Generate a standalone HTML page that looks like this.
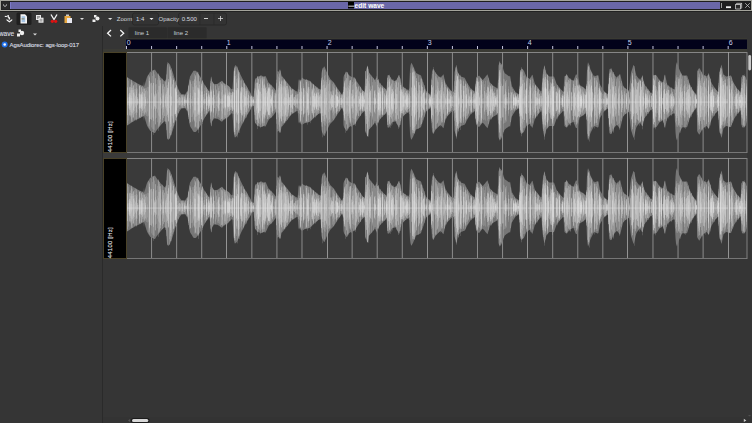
<!DOCTYPE html>
<html><head><meta charset="utf-8"><style>
*{margin:0;padding:0;box-sizing:border-box}
html,body{width:752px;height:423px;overflow:hidden;background:#353535;font-family:"Liberation Sans",sans-serif;}
.a{position:absolute;left:0;top:0}
svg{font-family:"Liberation Sans",sans-serif}
</style></head><body>
<svg class="a" width="752" height="423">
 <!-- title bar -->
 <rect x="0" y="0" width="752" height="11" fill="#a4a49c"/>
 <rect x="1" y="1" width="750" height="9" fill="#1e1e1e"/>
 <rect x="1.5" y="1.5" width="8" height="8" fill="#2a2a2a"/>
 <rect x="10" y="2" width="710" height="7" fill="#6a67a8"/>
 <rect x="10" y="2" width="1" height="7" fill="#7c7ac8"/>
 <path d="M3 4 L5 6.3 L7 4 L7 5 L5 7 L3 5Z" fill="#e8e8e8"/>
 <rect x="348" y="2" width="6" height="6.5" fill="#000"/>
 <rect x="348.3" y="5.7" width="5.8" height="0.9" fill="#f0f0f0"/>
 <text x="354.6" y="7.8" font-weight="bold" font-size="6.6" fill="#fff">edit wave</text>
 <rect x="721" y="3" width="1" height="5" fill="#9a9a9a"/>
 <rect x="726" y="6.3" width="5" height="1.8" fill="#f0f0f0"/>
 <path d="M735.5 4.5 h5 v4.5 h-5z" stroke="#c8c8c8" stroke-width="0.8" fill="#2a2a2a"/>
 <path d="M735.5 4.5 l1.2-1.2 h5 l-1.2 1.2z M740.5 4.5 l1.2-1.2 v4.5 l-1.2 1.2z" stroke="#c8c8c8" stroke-width="0.7" fill="#666"/>
 <path d="M745.2 3.2 L749.8 7.8 M749.8 3.2 L745.2 7.8" stroke="#c0c0c0" stroke-width="0.8"/>
 <rect x="0" y="11" width="752" height="1" fill="#222"/>

 <!-- toolbar -->
 <rect x="16.5" y="12.5" width="15" height="12.5" rx="1.5" fill="#1f1f1f"/>
 <g transform="translate(0,11)">
 <g fill="#f4f4f4">
  <rect x="4.8" y="4.9" width="2.1" height="1.1"/>
  <path d="M7.4 4 h1.4 v1.6 l1.3 1.2 v1.7 h-1.5 v-1.2 l-1.2-1.2z"/>
  <path d="M6.6 8 L9.4 10 L12.2 8 V9.6 L9.4 11.6 L6.6 9.6Z"/>
 </g>
 <path d="M20.5 3.3 h4.5 l2 2 v7.2 h-6.5z" fill="#f4f4f4"/>
 <rect x="21.6" y="5.2" width="3.6" height="6" fill="#a4c4e4"/>
 <rect x="21.5" y="7.5" width="3" height="0.8" fill="#807040"/>
 <rect x="36" y="4" width="5" height="5" fill="#e8e8e8"/><rect x="37" y="5" width="3" height="3" fill="#999"/>
 <rect x="38.5" y="6.7" width="5" height="5" fill="#f0f0f0"/><rect x="39.5" y="7.7" width="3" height="3" fill="#aaa"/>
 <path d="M51 3.5 L54 8.5 L57 3.5" stroke="#f4f4f4" stroke-width="1.3" fill="none"/>
 <circle cx="52.3" cy="10.3" r="1.6" fill="#e01010"/><circle cx="55.7" cy="10.3" r="1.6" fill="#e01010"/>
 <path d="M64.5 5 h6 v7 h-6z" fill="#e8a840"/>
 <rect x="66" y="3.5" width="3" height="1.5" fill="#ccc"/>
 <rect x="67" y="7" width="5" height="5" fill="#e8e8f0"/>
 <path d="M80 7 h4 l-2 2z" fill="#ddd"/>
 <g fill="#eee"><rect x="92.5" y="8.5" width="3" height="2.5"/><rect x="94" y="4" width="2.5" height="2.5"/><circle cx="97.5" cy="7.5" r="2"/></g>
 <path d="M108 7 h4.3 l-2.15 2z" fill="#ddd"/>
 <rect x="132.5" y="2" width="26" height="12" rx="2" fill="#333" stroke="#262626" stroke-width="0.8"/>
 <rect x="178.5" y="2" width="48" height="12" rx="2" fill="#333" stroke="#262626" stroke-width="0.8"/>
 <rect x="199.5" y="2" width="0.8" height="12" fill="#2a2a2a"/><rect x="213.5" y="2" width="0.8" height="12" fill="#2a2a2a"/>
 <text x="116.8" y="10.3" font-size="6" fill="#d0d4d8" stroke="none">Zoom</text>
 <text x="136" y="10.3" font-size="6" fill="#d8dce0">1:4</text>
 <path d="M149.5 7 h4 l-2 2z" fill="#eee"/>
 <text x="158.6" y="10.3" font-size="6" fill="#d0d4d8" stroke="none">Opacity</text>
 <text x="181.8" y="10.3" font-size="6" fill="#d8dce0">0.500</text>
 <rect x="204" y="7" width="4" height="1" fill="#d0d0d0"/>
 <rect x="218" y="7.1" width="5" height="0.8" fill="#d8d8d8"/><rect x="220.1" y="5" width="0.8" height="5" fill="#d8d8d8"/>
 </g>

 <!-- left panel -->
 <rect x="102" y="26" width="1" height="397" fill="#2a2a2a"/>
 <text x="-1.2" y="36.2" font-size="6.6" fill="#d8dce0" stroke="#d8dce0" stroke-width="0.12">wave</text>
 <g transform="translate(0,26)">
 <g fill="#eee"><rect x="17" y="7.5" width="3" height="3"/><rect x="18.5" y="3.5" width="2.5" height="2.5"/><circle cx="22" cy="7" r="2.2"/></g>
 <path d="M33 7.5 h4 l-2 2z" fill="#ddd"/>
 <circle cx="4.7" cy="18.5" r="3" fill="#1f6fe8"/><circle cx="4.7" cy="18.5" r="1.3" fill="#fff"/>
 </g>
 <text x="9.6" y="47" font-size="6" letter-spacing="-0.12" fill="#d8dce0" stroke="#d8dce0" stroke-width="0.12">AgsAudiorec: ags-loop-017</text>

 <!-- tabs -->
 <g transform="translate(103,26)">
 <path d="M8 4 L4.6 7.2 L8 10.4" stroke="#f4f4f4" stroke-width="1.3" fill="none"/>
 <path d="M17.3 4 L20.7 7.2 L17.3 10.4" stroke="#f4f4f4" stroke-width="1.3" fill="none"/>
 <rect x="25.5" y="1.3" width="38.5" height="11.4" fill="#2b2b2b" rx="0.8"/>
 <rect x="64.5" y="1.3" width="39.2" height="11.4" fill="#2b2b2b" rx="0.8"/>
 <text x="31.8" y="9" font-size="6" fill="#c8d0d8" stroke="none">line 1</text>
 <text x="70.7" y="9" font-size="6" fill="#c8d0d8" stroke="none">line 2</text>
 </g>

 <!-- ruler -->
 <rect x="126" y="38.4" width="621" height="1.1" fill="#3e3e32"/>
 <rect x="126" y="39.5" width="621" height="9.5" fill="#02021a"/>
 <g fill="#c8d4f0" font-size="7">
 <rect x="126.00" y="46" width="1" height="3" fill="#c8c8e0"/><rect x="151.07" y="46" width="1" height="3" fill="#c8c8e0"/><rect x="176.14" y="46" width="1" height="3" fill="#c8c8e0"/><rect x="201.21" y="46" width="1" height="3" fill="#c8c8e0"/><rect x="226.28" y="46" width="1" height="3" fill="#c8c8e0"/><rect x="251.35" y="46" width="1" height="3" fill="#c8c8e0"/><rect x="276.42" y="46" width="1" height="3" fill="#c8c8e0"/><rect x="301.49" y="46" width="1" height="3" fill="#c8c8e0"/><rect x="326.56" y="46" width="1" height="3" fill="#c8c8e0"/><rect x="351.63" y="46" width="1" height="3" fill="#c8c8e0"/><rect x="376.70" y="46" width="1" height="3" fill="#c8c8e0"/><rect x="401.77" y="46" width="1" height="3" fill="#c8c8e0"/><rect x="426.84" y="46" width="1" height="3" fill="#c8c8e0"/><rect x="451.91" y="46" width="1" height="3" fill="#c8c8e0"/><rect x="476.98" y="46" width="1" height="3" fill="#c8c8e0"/><rect x="502.05" y="46" width="1" height="3" fill="#c8c8e0"/><rect x="527.12" y="46" width="1" height="3" fill="#c8c8e0"/><rect x="552.19" y="46" width="1" height="3" fill="#c8c8e0"/><rect x="577.26" y="46" width="1" height="3" fill="#c8c8e0"/><rect x="602.33" y="46" width="1" height="3" fill="#c8c8e0"/><rect x="627.40" y="46" width="1" height="3" fill="#c8c8e0"/><rect x="652.47" y="46" width="1" height="3" fill="#c8c8e0"/><rect x="677.54" y="46" width="1" height="3" fill="#c8c8e0"/><rect x="702.61" y="46" width="1" height="3" fill="#c8c8e0"/><rect x="727.68" y="46" width="1" height="3" fill="#c8c8e0"/>
 <text x="126.8" y="44.9">0</text><text x="226.8" y="44.9">1</text><text x="327.8" y="44.9">2</text><text x="427.8" y="44.9">3</text><text x="527.8" y="44.9">4</text><text x="627.8" y="44.9">5</text><text x="728.8" y="44.9">6</text>
 </g>

 <!-- tracks -->
 <rect x="103" y="49" width="644" height="3" fill="#3a3a34"/>
 <rect x="103" y="153" width="644" height="5" fill="#3a3a3a"/>
 <rect x="103.5" y="52.5" width="23" height="100" fill="#000" stroke="#4a4228" stroke-width="1"/>
 <rect x="103.5" y="158.5" width="23" height="100" fill="#000" stroke="#4a4228" stroke-width="1"/>
 <text transform="translate(112.3,152.2) rotate(-90)" font-size="5.9" letter-spacing="0.25" fill="#e8ecf0" stroke="#e8ecf0" stroke-width="0.12">44100 [Hz]</text>
 <text transform="translate(112.3,258.2) rotate(-90)" font-size="5.9" letter-spacing="0.25" fill="#e8ecf0" stroke="#e8ecf0" stroke-width="0.12">44100 [Hz]</text>
 <rect x="127" y="52" width="620" height="101" fill="#3a3a3a"/>
 <rect x="127" y="158" width="620" height="101" fill="#3a3a3a"/>
 <rect x="127" y="52" width="620" height="1" fill="#868686"/>
 <rect x="127" y="152" width="620" height="1" fill="#767676"/>
 <rect x="127" y="158" width="620" height="1" fill="#868686"/>
 <rect x="127" y="258" width="620" height="1" fill="#767676"/>
 <rect x="746.5" y="52" width="1" height="101" fill="#808080"/>
 <rect x="746.5" y="158" width="1" height="101" fill="#808080"/>
 <rect x="151.07" y="52" width="1" height="100" fill="#8c8c8c"/><rect x="176.14" y="52" width="1" height="100" fill="#8c8c8c"/><rect x="201.21" y="52" width="1" height="100" fill="#8c8c8c"/><rect x="251.35" y="52" width="1" height="100" fill="#8c8c8c"/><rect x="276.42" y="52" width="1" height="100" fill="#8c8c8c"/><rect x="301.49" y="52" width="1" height="100" fill="#8c8c8c"/><rect x="351.63" y="52" width="1" height="100" fill="#8c8c8c"/><rect x="376.70" y="52" width="1" height="100" fill="#8c8c8c"/><rect x="401.77" y="52" width="1" height="100" fill="#8c8c8c"/><rect x="451.91" y="52" width="1" height="100" fill="#8c8c8c"/><rect x="476.98" y="52" width="1" height="100" fill="#8c8c8c"/><rect x="502.05" y="52" width="1" height="100" fill="#8c8c8c"/><rect x="552.19" y="52" width="1" height="100" fill="#8c8c8c"/><rect x="577.26" y="52" width="1" height="100" fill="#8c8c8c"/><rect x="602.33" y="52" width="1" height="100" fill="#8c8c8c"/><rect x="652.47" y="52" width="1" height="100" fill="#8c8c8c"/><rect x="677.54" y="52" width="1" height="100" fill="#8c8c8c"/><rect x="702.61" y="52" width="1" height="100" fill="#8c8c8c"/>
 <rect x="151.07" y="158" width="1" height="100" fill="#8c8c8c"/><rect x="176.14" y="158" width="1" height="100" fill="#8c8c8c"/><rect x="201.21" y="158" width="1" height="100" fill="#8c8c8c"/><rect x="251.35" y="158" width="1" height="100" fill="#8c8c8c"/><rect x="276.42" y="158" width="1" height="100" fill="#8c8c8c"/><rect x="301.49" y="158" width="1" height="100" fill="#8c8c8c"/><rect x="351.63" y="158" width="1" height="100" fill="#8c8c8c"/><rect x="376.70" y="158" width="1" height="100" fill="#8c8c8c"/><rect x="401.77" y="158" width="1" height="100" fill="#8c8c8c"/><rect x="451.91" y="158" width="1" height="100" fill="#8c8c8c"/><rect x="476.98" y="158" width="1" height="100" fill="#8c8c8c"/><rect x="502.05" y="158" width="1" height="100" fill="#8c8c8c"/><rect x="552.19" y="158" width="1" height="100" fill="#8c8c8c"/><rect x="577.26" y="158" width="1" height="100" fill="#8c8c8c"/><rect x="602.33" y="158" width="1" height="100" fill="#8c8c8c"/><rect x="652.47" y="158" width="1" height="100" fill="#8c8c8c"/><rect x="677.54" y="158" width="1" height="100" fill="#8c8c8c"/><rect x="702.61" y="158" width="1" height="100" fill="#8c8c8c"/>
 <g id="w1"><polygon points="127.0,77.2 127.5,77.4 128.0,77.7 128.5,78.1 129.0,78.4 129.5,78.7 130.0,79.0 130.5,79.4 131.0,79.7 131.5,80.0 132.0,80.3 132.5,80.6 133.0,80.9 133.5,81.2 134.0,81.5 134.5,81.8 135.0,82.1 135.5,82.4 136.0,82.7 136.5,83.0 137.0,83.2 137.5,83.4 138.0,83.7 138.5,83.9 139.0,84.2 139.5,84.4 140.0,84.7 140.5,84.9 141.0,85.2 141.5,85.4 142.0,85.7 142.5,85.9 143.0,86.2 143.5,86.8 144.0,81.5 144.5,86.5 145.0,84.0 145.5,81.9 146.0,80.3 146.5,78.6 147.0,77.0 147.5,76.0 148.0,75.2 148.5,74.4 149.0,73.7 149.5,72.9 150.0,72.1 150.5,71.7 151.0,71.3 151.5,71.0 152.0,70.7 152.5,70.5 153.0,70.3 153.5,70.1 154.0,69.9 154.5,69.7 155.0,69.6 155.5,70.4 156.0,71.3 156.5,72.1 157.0,72.8 157.5,73.4 158.0,74.1 158.5,74.7 159.0,75.3 159.5,75.9 160.0,76.6 160.5,77.2 161.0,77.8 161.5,78.3 162.0,78.8 162.5,79.3 163.0,79.8 163.5,80.3 164.0,80.8 164.5,81.3 165.0,81.2 165.5,80.9 166.0,78.2 166.5,71.6 167.0,65.0 167.5,63.9 168.0,62.9 168.5,62.8 169.0,63.5 169.5,64.1 170.0,64.8 170.5,66.1 171.0,67.5 171.5,68.8 172.0,70.2 172.5,71.6 173.0,73.0 173.5,74.6 174.0,76.4 174.5,78.1 175.0,79.8 175.5,81.5 176.0,82.8 176.5,84.1 177.0,85.4 177.5,86.7 178.0,88.0 178.5,89.3 179.0,90.6 179.5,91.4 180.0,92.2 180.5,92.9 181.0,93.6 181.5,94.4 182.0,94.4 182.5,94.4 183.0,94.4 183.5,94.4 184.0,94.4 184.5,94.4 185.0,94.4 185.5,93.8 186.0,93.0 186.5,92.3 187.0,91.6 187.5,90.8 188.0,88.0 188.5,85.1 189.0,82.1 189.5,79.2 190.0,76.5 190.5,75.7 191.0,74.9 191.5,74.1 192.0,73.3 192.5,72.4 193.0,71.6 193.5,70.8 194.0,70.7 194.5,70.7 195.0,70.7 195.5,70.7 196.0,70.8 196.5,71.4 197.0,72.0 197.5,72.6 198.0,73.2 198.5,73.9 199.0,74.7 199.5,75.4 200.0,76.2 200.5,77.0 201.0,77.8 201.5,78.8 202.0,79.8 202.5,80.8 203.0,81.7 203.5,82.7 204.0,83.7 204.5,84.7 205.0,85.4 205.5,86.1 206.0,86.8 206.5,87.5 207.0,88.2 207.5,88.9 208.0,89.6 208.5,90.3 209.0,91.0 209.5,91.7 210.0,87.4 210.5,80.7 211.0,76.8 211.5,76.8 212.0,80.6 212.5,81.9 213.0,82.6 213.5,83.3 214.0,83.9 214.5,84.3 215.0,84.2 215.5,84.1 216.0,84.0 216.5,83.9 217.0,83.9 217.5,83.8 218.0,83.6 218.5,83.2 219.0,82.8 219.5,82.5 220.0,82.1 220.5,81.7 221.0,81.3 221.5,81.1 222.0,80.8 222.5,81.3 223.0,81.9 223.5,82.6 224.0,83.2 224.5,83.5 225.0,83.8 225.5,84.1 226.0,84.4 226.5,84.7 227.0,85.0 227.5,85.3 228.0,85.6 228.5,85.9 229.0,86.4 229.5,87.0 230.0,87.6 230.5,88.2 231.0,88.7 231.5,89.3 232.0,89.3 232.5,88.6 233.0,81.2 233.5,72.0 234.0,69.3 234.5,67.7 235.0,66.0 235.5,65.0 236.0,65.6 236.5,66.3 237.0,66.9 237.5,67.9 238.0,69.0 238.5,70.2 239.0,71.3 239.5,72.5 240.0,73.6 240.5,74.7 241.0,75.8 241.5,76.8 242.0,77.8 242.5,78.8 243.0,79.7 243.5,80.7 244.0,81.7 244.5,82.7 245.0,83.5 245.5,84.4 246.0,85.2 246.5,86.1 247.0,87.0 247.5,87.8 248.0,88.7 248.5,89.5 249.0,90.4 249.5,91.2 250.0,92.0 250.5,92.9 251.0,93.7 251.5,94.5 252.0,95.3 252.5,96.1 253.0,96.7 253.5,96.7 254.0,91.8 254.5,83.2 255.0,79.8 255.5,79.2 256.0,78.6 256.5,78.0 257.0,77.4 257.5,76.9 258.0,76.5 258.5,76.4 259.0,76.2 259.5,76.0 260.0,75.9 260.5,75.7 261.0,75.5 261.5,75.5 262.0,75.8 262.5,76.0 263.0,76.3 263.5,76.5 264.0,76.5 264.5,76.4 265.0,76.2 265.5,76.0 266.0,77.0 266.5,78.1 267.0,79.2 267.5,80.3 268.0,81.4 268.5,82.4 269.0,83.0 269.5,83.5 270.0,84.0 270.5,84.4 271.0,84.9 271.5,85.4 272.0,85.9 272.5,86.4 273.0,86.9 273.5,87.4 274.0,88.1 274.5,88.8 275.0,89.5 275.5,90.1 276.0,90.8 276.5,80.4 277.0,70.7 277.5,71.2 278.0,71.6 278.5,71.8 279.0,70.9 279.5,70.1 280.0,69.3 280.5,70.4 281.0,73.1 281.5,75.5 282.0,76.1 282.5,76.7 283.0,77.3 283.5,77.9 284.0,78.5 284.5,79.1 285.0,79.7 285.5,80.4 286.0,81.0 286.5,81.7 287.0,82.3 287.5,83.0 288.0,83.6 288.5,84.3 289.0,84.9 289.5,85.6 290.0,86.3 290.5,86.9 291.0,87.6 291.5,88.2 292.0,88.6 292.5,88.9 293.0,89.2 293.5,89.5 294.0,89.8 294.5,90.1 295.0,90.4 295.5,90.7 296.0,91.0 296.5,91.3 297.0,91.6 297.5,91.9 298.0,88.0 298.5,80.9 299.0,79.1 299.5,80.1 300.0,81.1 300.5,80.6 301.0,79.6 301.5,78.7 302.0,77.8 302.5,78.1 303.0,78.4 303.5,78.7 304.0,79.0 304.5,79.3 305.0,79.6 305.5,79.7 306.0,79.8 306.5,80.0 307.0,80.1 307.5,80.2 308.0,80.3 308.5,80.5 309.0,80.6 309.5,80.7 310.0,81.0 310.5,81.5 311.0,82.0 311.5,82.5 312.0,82.9 312.5,83.4 313.0,83.9 313.5,84.4 314.0,84.8 314.5,85.3 315.0,85.7 315.5,86.1 316.0,86.5 316.5,87.0 317.0,87.4 317.5,87.8 318.0,88.3 318.5,88.6 319.0,88.8 319.5,89.1 320.0,89.3 320.5,89.6 321.0,82.6 321.5,73.2 322.0,70.5 322.5,69.5 323.0,68.5 323.5,67.5 324.0,66.5 324.5,66.6 325.0,67.8 325.5,69.0 326.0,70.3 326.5,71.5 327.0,72.6 327.5,73.5 328.0,74.5 328.5,75.5 329.0,76.5 329.5,77.5 330.0,78.4 330.5,79.2 331.0,79.7 331.5,80.2 332.0,80.7 332.5,81.2 333.0,81.7 333.5,82.1 334.0,82.7 334.5,83.5 335.0,84.3 335.5,85.2 336.0,86.0 336.5,86.8 337.0,87.6 337.5,88.4 338.0,89.1 338.5,89.8 339.0,90.5 339.5,91.2 340.0,91.9 340.5,92.6 341.0,93.3 341.5,94.0 342.0,94.1 342.5,93.6 343.0,91.7 343.5,77.5 344.0,75.3 344.5,74.6 345.0,73.8 345.5,73.0 346.0,72.2 346.5,71.4 347.0,72.2 347.5,73.1 348.0,74.1 348.5,74.9 349.0,75.3 349.5,75.6 350.0,76.0 350.5,76.3 351.0,76.6 351.5,76.8 352.0,77.0 352.5,77.1 353.0,77.3 353.5,77.4 354.0,77.6 354.5,77.8 355.0,78.4 355.5,79.3 356.0,80.1 356.5,80.9 357.0,81.7 357.5,82.5 358.0,83.3 358.5,84.1 359.0,84.8 359.5,85.6 360.0,86.3 360.5,87.0 361.0,87.8 361.5,88.5 362.0,89.3 362.5,90.0 363.0,90.7 363.5,91.0 364.0,91.2 364.5,91.4 365.0,81.5 365.5,71.8 366.0,70.2 366.5,68.6 367.0,66.9 367.5,65.3 368.0,66.8 368.5,69.7 369.0,72.5 369.5,73.5 370.0,74.0 370.5,74.5 371.0,75.0 371.5,75.6 372.0,76.2 372.5,76.9 373.0,77.5 373.5,78.1 374.0,78.8 374.5,79.4 375.0,80.0 375.5,79.2 376.0,77.9 376.5,76.6 377.0,75.6 377.5,77.1 378.0,78.6 378.5,80.0 379.0,81.5 379.5,82.7 380.0,83.3 380.5,83.8 381.0,84.4 381.5,85.0 382.0,85.5 382.5,86.1 383.0,86.6 383.5,87.2 384.0,87.6 384.5,88.0 385.0,88.4 385.5,88.8 386.0,89.2 386.5,89.6 387.0,82.7 387.5,75.4 388.0,75.2 388.5,75.0 389.0,74.9 389.5,75.7 390.0,76.6 390.5,77.5 391.0,78.4 391.5,79.3 392.0,80.2 392.5,80.3 393.0,80.5 393.5,80.7 394.0,80.8 394.5,81.0 395.0,81.2 395.5,81.3 396.0,80.6 396.5,79.7 397.0,78.7 397.5,77.7 398.0,76.7 398.5,75.7 399.0,74.8 399.5,75.4 400.0,77.6 400.5,79.8 401.0,82.0 401.5,84.2 402.0,85.2 402.5,85.7 403.0,86.2 403.5,86.7 404.0,87.2 404.5,87.7 405.0,88.2 405.5,88.6 406.0,88.9 406.5,89.2 407.0,89.6 407.5,89.9 408.0,90.2 408.5,90.6 409.0,88.9 409.5,79.1 410.0,69.3 410.5,65.6 411.0,63.7 411.5,62.8 412.0,63.8 412.5,64.8 413.0,65.7 413.5,66.9 414.0,68.1 414.5,69.2 415.0,70.4 415.5,71.6 416.0,72.8 416.5,73.3 417.0,73.5 417.5,73.7 418.0,74.0 418.5,74.2 419.0,74.5 419.5,74.7 420.0,75.0 420.5,75.2 421.0,75.6 421.5,77.0 422.0,78.5 422.5,80.0 423.0,81.4 423.5,82.9 424.0,84.5 424.5,86.1 425.0,87.7 425.5,89.2 426.0,90.8 426.5,91.3 427.0,91.8 427.5,92.3 428.0,92.8 428.5,93.2 429.0,93.6 429.5,94.0 430.0,94.3 430.5,94.7 431.0,90.8 431.5,78.8 432.0,71.4 432.5,70.2 433.0,68.9 433.5,68.9 434.0,69.8 434.5,70.8 435.0,71.8 435.5,72.8 436.0,73.4 436.5,73.9 437.0,74.4 437.5,74.9 438.0,75.4 438.5,75.9 439.0,76.4 439.5,76.9 440.0,77.3 440.5,77.8 441.0,77.2 441.5,76.6 442.0,76.0 442.5,75.4 443.0,74.8 443.5,74.3 444.0,76.6 444.5,78.9 445.0,81.2 445.5,82.9 446.0,83.7 446.5,84.6 447.0,85.5 447.5,86.3 448.0,87.0 448.5,87.6 449.0,88.1 449.5,88.7 450.0,89.3 450.5,89.9 451.0,90.4 451.5,90.9 452.0,91.1 452.5,91.4 453.0,91.6 453.5,91.9 454.0,84.0 454.5,72.4 455.0,70.3 455.5,68.1 456.0,65.9 456.5,64.8 457.0,67.6 457.5,70.4 458.0,73.1 458.5,73.7 459.0,74.3 459.5,74.9 460.0,75.5 460.5,76.1 461.0,76.6 461.5,76.8 462.0,77.0 462.5,77.1 463.0,77.3 463.5,77.5 464.0,77.6 464.5,77.8 465.0,78.6 465.5,79.6 466.0,80.6 466.5,81.5 467.0,82.5 467.5,83.3 468.0,84.2 468.5,85.0 469.0,85.8 469.5,86.6 470.0,87.4 470.5,88.2 471.0,88.8 471.5,89.2 472.0,89.6 472.5,90.0 473.0,90.4 473.5,90.9 474.0,91.3 474.5,91.7 475.0,90.3 475.5,84.4 476.0,78.5 476.5,77.5 477.0,77.1 477.5,76.7 478.0,76.3 478.5,75.9 479.0,75.5 479.5,76.0 480.0,76.7 480.5,77.3 481.0,78.0 481.5,78.6 482.0,79.3 482.5,79.9 483.0,79.8 483.5,79.2 484.0,78.6 484.5,78.0 485.0,77.4 485.5,76.7 486.0,76.1 486.5,75.5 487.0,74.9 487.5,74.3 488.0,75.9 488.5,77.6 489.0,79.3 489.5,81.1 490.0,82.6 490.5,83.1 491.0,83.6 491.5,84.1 492.0,84.6 492.5,85.1 493.0,85.5 493.5,86.0 494.0,86.3 494.5,86.6 495.0,86.9 495.5,87.2 496.0,87.5 496.5,87.7 497.0,88.0 497.5,88.3 498.0,80.0 498.5,65.6 499.0,63.9 499.5,62.1 500.0,62.4 500.5,63.0 501.0,63.6 501.5,64.6 502.0,65.6 502.5,66.9 503.0,68.3 503.5,69.8 504.0,71.3 504.5,72.7 505.0,73.4 505.5,73.7 506.0,74.1 506.5,74.5 507.0,74.8 507.5,75.2 508.0,75.6 508.5,75.9 509.0,76.3 509.5,76.5 510.0,75.5 510.5,78.1 511.0,81.1 511.5,84.0 512.0,86.3 512.5,87.1 513.0,88.0 513.5,88.8 514.0,89.6 514.5,90.4 515.0,91.2 515.5,92.0 516.0,92.3 516.5,92.7 517.0,93.0 517.5,93.3 518.0,93.6 518.5,94.0 519.0,94.3 519.5,84.9 520.0,73.3 520.5,70.8 521.0,69.6 521.5,68.4 522.0,68.8 522.5,69.3 523.0,69.8 523.5,70.3 524.0,70.9 524.5,72.1 525.0,73.4 525.5,74.6 526.0,75.8 526.5,76.7 527.0,77.1 527.5,77.4 528.0,77.7 528.5,78.0 529.0,78.4 529.5,78.7 530.0,78.9 530.5,77.9 531.0,76.9 531.5,76.0 532.0,75.0 532.5,74.8 533.0,76.8 533.5,78.7 534.0,80.7 534.5,82.6 535.0,84.0 535.5,84.7 536.0,85.3 536.5,86.0 537.0,86.6 537.5,87.3 538.0,87.9 538.5,88.6 539.0,89.2 539.5,89.8 540.0,90.3 540.5,90.9 541.0,91.5 541.5,90.7 542.0,83.3 542.5,76.0 543.0,72.3 543.5,69.6 544.0,67.0 544.5,65.1 545.0,67.4 545.5,69.7 546.0,72.0 546.5,73.4 547.0,74.0 547.5,74.6 548.0,75.2 548.5,75.7 549.0,76.3 549.5,76.6 550.0,76.6 550.5,76.6 551.0,76.6 551.5,76.6 552.0,76.6 552.5,76.6 553.0,76.6 553.5,76.6 554.0,76.6 554.5,77.9 555.0,79.3 555.5,80.8 556.0,82.3 556.5,83.7 557.0,84.4 557.5,85.0 558.0,85.7 558.5,86.4 559.0,87.0 559.5,87.7 560.0,88.3 560.5,88.9 561.0,89.4 561.5,89.9 562.0,90.4 562.5,91.0 563.0,91.5 563.5,91.7 564.0,82.6 564.5,76.5 565.0,76.1 565.5,75.8 566.0,75.4 566.5,75.0 567.0,75.2 567.5,75.9 568.0,76.6 568.5,77.3 569.0,78.0 569.5,78.6 570.0,79.1 570.5,79.4 571.0,79.6 571.5,79.8 572.0,80.1 572.5,80.3 573.0,80.6 573.5,80.5 574.0,79.2 574.5,78.0 575.0,76.7 575.5,75.5 576.0,74.3 576.5,74.6 577.0,74.9 577.5,75.2 578.0,76.4 578.5,79.1 579.0,81.7 579.5,84.3 580.0,85.2 580.5,85.5 581.0,85.8 581.5,86.1 582.0,86.5 582.5,86.8 583.0,87.1 583.5,87.5 584.0,87.9 584.5,88.3 585.0,88.6 585.5,89.0 586.0,89.4 586.5,83.1 587.0,69.8 587.5,65.0 588.0,62.2 588.5,63.2 589.0,64.8 589.5,66.4 590.0,68.0 590.5,69.6 591.0,70.6 591.5,71.5 592.0,72.5 592.5,73.5 593.0,74.5 593.5,75.5 594.0,76.4 594.5,76.5 595.0,76.2 595.5,76.0 596.0,75.8 596.5,75.6 597.0,75.4 597.5,75.2 598.0,75.0 598.5,75.9 599.0,78.7 599.5,81.4 600.0,84.2 600.5,85.5 601.0,86.3 601.5,87.1 602.0,88.0 602.5,88.8 603.0,89.6 603.5,90.4 604.0,91.0 604.5,91.4 605.0,91.9 605.5,92.3 606.0,92.7 606.5,93.1 607.0,93.5 607.5,94.0 608.0,93.7 608.5,83.4 609.0,73.1 609.5,69.3 610.0,69.0 610.5,68.7 611.0,68.4 611.5,69.4 612.0,70.3 612.5,71.3 613.0,72.3 613.5,73.3 614.0,74.3 614.5,75.2 615.0,75.8 615.5,76.3 616.0,76.8 616.5,77.3 617.0,77.8 617.5,77.1 618.0,76.5 618.5,75.8 619.0,75.1 619.5,74.4 620.0,73.7 620.5,75.6 621.0,77.7 621.5,79.7 622.0,81.8 622.5,83.8 623.0,85.9 623.5,86.5 624.0,87.0 624.5,87.5 625.0,88.0 625.5,88.5 626.0,88.8 626.5,89.1 627.0,89.5 627.5,89.8 628.0,90.1 628.5,90.4 629.0,90.8 629.5,86.7 630.0,81.8 630.5,76.9 631.0,72.7 631.5,71.1 632.0,69.5 632.5,67.9 633.0,66.3 633.5,64.7 634.0,65.7 634.5,67.8 635.0,69.9 635.5,72.0 636.0,74.1 636.5,75.7 637.0,76.3 637.5,77.0 638.0,77.7 638.5,78.3 639.0,79.0 639.5,79.6 640.0,80.1 640.5,79.2 641.0,78.3 641.5,77.5 642.0,76.6 642.5,76.6 643.0,78.4 643.5,80.3 644.0,82.1 644.5,84.0 645.0,85.2 645.5,85.9 646.0,86.5 646.5,87.2 647.0,87.8 647.5,88.5 648.0,89.1 648.5,89.8 649.0,90.5 649.5,91.2 650.0,91.8 650.5,92.5 651.0,93.2 651.5,92.7 652.0,92.2 652.5,84.5 653.0,76.3 653.5,75.6 654.0,74.9 654.5,75.0 655.0,75.1 655.5,75.2 656.0,75.3 656.5,75.6 657.0,76.3 657.5,77.1 658.0,77.9 658.5,78.7 659.0,79.5 659.5,80.2 660.0,80.5 660.5,80.9 661.0,81.2 661.5,81.5 662.0,81.8 662.5,82.2 663.0,82.5 663.5,80.4 664.0,77.9 664.5,75.5 665.0,74.3 665.5,76.6 666.0,78.9 666.5,81.3 667.0,83.6 667.5,85.1 668.0,85.5 668.5,85.9 669.0,86.2 669.5,86.6 670.0,87.0 670.5,87.4 671.0,87.7 671.5,87.9 672.0,88.2 672.5,88.5 673.0,88.8 673.5,89.1 674.0,89.3 674.5,89.6 675.0,80.3 675.5,70.5 676.0,65.1 676.5,63.3 677.0,62.1 677.5,63.7 678.0,65.2 678.5,66.8 679.0,68.4 679.5,69.8 680.0,70.8 680.5,71.8 681.0,72.8 681.5,73.8 682.0,74.7 682.5,75.4 683.0,75.4 683.5,75.4 684.0,75.4 684.5,75.4 685.0,75.4 685.5,75.4 686.0,75.4 686.5,75.4 687.0,75.4 687.5,76.5 688.0,78.2 688.5,79.9 689.0,81.7 689.5,83.4 690.0,84.5 690.5,85.5 691.0,86.5 691.5,87.4 692.0,88.4 692.5,89.4 693.0,90.4 693.5,91.2 694.0,91.8 694.5,92.4 695.0,93.0 695.5,93.6 696.0,94.2 696.5,94.8 697.0,83.4 697.5,70.6 698.0,69.8 698.5,69.0 699.0,68.2 699.5,68.2 700.0,69.1 700.5,70.0 701.0,70.9 701.5,71.8 702.0,72.7 702.5,73.6 703.0,74.3 703.5,74.7 704.0,75.0 704.5,75.3 705.0,75.7 705.5,76.0 706.0,76.3 706.5,76.6 707.0,76.0 707.5,75.4 708.0,74.8 708.5,74.2 709.0,74.0 709.5,75.9 710.0,77.7 710.5,79.5 711.0,81.4 711.5,82.8 712.0,83.7 712.5,84.5 713.0,85.3 713.5,86.1 714.0,86.9 714.5,87.7 715.0,88.5 715.5,89.1 716.0,89.7 716.5,90.3 717.0,90.9 717.5,91.5 718.0,91.2 718.5,83.3 719.0,75.5 719.5,71.8 720.0,70.0 720.5,68.1 721.0,66.3 721.5,64.5 722.0,66.6 722.5,69.4 723.0,72.2 723.5,74.4 724.0,74.8 724.5,75.2 725.0,75.6 725.5,76.1 726.0,76.5 726.5,76.6 727.0,76.4 727.5,76.3 728.0,76.2 728.5,76.1 729.0,75.9 729.5,75.8 730.0,75.7 730.5,75.6 731.0,75.5 731.5,76.9 732.0,78.3 732.5,79.8 733.0,81.3 733.5,82.7 734.0,83.5 734.5,84.3 735.0,85.1 735.5,85.9 736.0,86.7 736.5,87.6 737.0,88.4 737.5,88.9 738.0,89.4 738.5,89.9 739.0,90.4 739.5,90.9 740.0,91.3 740.5,91.8 741.0,86.4 741.5,78.2 742.0,75.7 742.5,75.3 743.0,74.9 743.5,75.2 744.0,75.5 744.5,75.9 745.0,76.3 745.5,76.7 746.0,78.1 746.5,79.6 747.0,80.2 747.0,122.4 746.5,123.0 746.0,124.5 745.5,125.9 745.0,126.3 744.5,126.7 744.0,127.1 743.5,127.4 743.0,127.7 742.5,127.3 742.0,126.9 741.5,124.4 741.0,116.2 740.5,110.8 740.0,111.3 739.5,111.7 739.0,112.2 738.5,112.7 738.0,113.2 737.5,113.7 737.0,114.2 736.5,115.0 736.0,115.9 735.5,116.7 735.0,117.5 734.5,118.3 734.0,119.1 733.5,119.9 733.0,121.3 732.5,122.8 732.0,124.3 731.5,125.7 731.0,127.1 730.5,127.0 730.0,126.9 729.5,126.8 729.0,126.7 728.5,126.5 728.0,126.4 727.5,126.3 727.0,126.2 726.5,126.0 726.0,126.1 725.5,126.5 725.0,127.0 724.5,127.4 724.0,127.8 723.5,128.2 723.0,130.4 722.5,133.2 722.0,136.0 721.5,138.1 721.0,136.3 720.5,134.5 720.0,132.6 719.5,130.8 719.0,127.1 718.5,119.3 718.0,111.4 717.5,111.1 717.0,111.7 716.5,112.3 716.0,112.9 715.5,113.5 715.0,114.1 714.5,114.9 714.0,115.7 713.5,116.5 713.0,117.3 712.5,118.1 712.0,118.9 711.5,119.8 711.0,121.2 710.5,123.1 710.0,124.9 709.5,126.7 709.0,128.6 708.5,128.4 708.0,127.8 707.5,127.2 707.0,126.6 706.5,126.0 706.0,126.3 705.5,126.6 705.0,126.9 704.5,127.3 704.0,127.6 703.5,127.9 703.0,128.3 702.5,129.0 702.0,129.9 701.5,130.8 701.0,131.7 700.5,132.6 700.0,133.5 699.5,134.4 699.0,134.4 698.5,133.6 698.0,132.8 697.5,132.0 697.0,119.2 696.5,107.8 696.0,108.4 695.5,109.0 695.0,109.6 694.5,110.2 694.0,110.8 693.5,111.4 693.0,112.2 692.5,113.2 692.0,114.2 691.5,115.2 691.0,116.1 690.5,117.1 690.0,118.1 689.5,119.2 689.0,120.9 688.5,122.7 688.0,124.4 687.5,126.1 687.0,127.2 686.5,127.2 686.0,127.2 685.5,127.2 685.0,127.2 684.5,127.2 684.0,127.2 683.5,127.2 683.0,127.2 682.5,127.2 682.0,127.9 681.5,128.8 681.0,129.8 680.5,130.8 680.0,131.8 679.5,132.8 679.0,134.2 678.5,135.8 678.0,137.4 677.5,138.9 677.0,140.5 676.5,139.3 676.0,137.5 675.5,132.1 675.0,122.3 674.5,113.0 674.0,113.3 673.5,113.5 673.0,113.8 672.5,114.1 672.0,114.4 671.5,114.7 671.0,114.9 670.5,115.2 670.0,115.6 669.5,116.0 669.0,116.4 668.5,116.7 668.0,117.1 667.5,117.5 667.0,119.0 666.5,121.3 666.0,123.7 665.5,126.0 665.0,128.3 664.5,127.1 664.0,124.7 663.5,122.2 663.0,120.1 662.5,120.4 662.0,120.8 661.5,121.1 661.0,121.4 660.5,121.7 660.0,122.1 659.5,122.4 659.0,123.1 658.5,123.9 658.0,124.7 657.5,125.5 657.0,126.3 656.5,127.0 656.0,127.3 655.5,127.4 655.0,127.5 654.5,127.6 654.0,127.7 653.5,127.0 653.0,126.3 652.5,118.1 652.0,110.4 651.5,109.9 651.0,109.4 650.5,110.1 650.0,110.8 649.5,111.4 649.0,112.1 648.5,112.8 648.0,113.5 647.5,114.1 647.0,114.8 646.5,115.4 646.0,116.1 645.5,116.7 645.0,117.4 644.5,118.6 644.0,120.5 643.5,122.3 643.0,124.2 642.5,126.0 642.0,126.0 641.5,125.1 641.0,124.3 640.5,123.4 640.0,122.5 639.5,123.0 639.0,123.6 638.5,124.3 638.0,124.9 637.5,125.6 637.0,126.3 636.5,126.9 636.0,128.5 635.5,130.6 635.0,132.7 634.5,134.8 634.0,136.9 633.5,137.9 633.0,136.3 632.5,134.7 632.0,133.1 631.5,131.5 631.0,129.9 630.5,125.7 630.0,120.8 629.5,115.9 629.0,111.8 628.5,112.2 628.0,112.5 627.5,112.8 627.0,113.1 626.5,113.5 626.0,113.8 625.5,114.1 625.0,114.6 624.5,115.1 624.0,115.6 623.5,116.1 623.0,116.7 622.5,118.8 622.0,120.8 621.5,122.9 621.0,124.9 620.5,127.0 620.0,128.9 619.5,128.2 619.0,127.5 618.5,126.8 618.0,126.1 617.5,125.5 617.0,124.8 616.5,125.3 616.0,125.8 615.5,126.3 615.0,126.8 614.5,127.4 614.0,128.3 613.5,129.3 613.0,130.3 612.5,131.3 612.0,132.3 611.5,133.2 611.0,134.2 610.5,133.9 610.0,133.6 609.5,133.3 609.0,129.5 608.5,119.2 608.0,108.9 607.5,108.6 607.0,109.1 606.5,109.5 606.0,109.9 605.5,110.3 605.0,110.7 604.5,111.2 604.0,111.6 603.5,112.2 603.0,113.0 602.5,113.8 602.0,114.6 601.5,115.5 601.0,116.3 600.5,117.1 600.0,118.4 599.5,121.2 599.0,123.9 598.5,126.7 598.0,127.6 597.5,127.4 597.0,127.2 596.5,127.0 596.0,126.8 595.5,126.6 595.0,126.4 594.5,126.1 594.0,126.2 593.5,127.1 593.0,128.1 592.5,129.1 592.0,130.1 591.5,131.1 591.0,132.0 590.5,133.0 590.0,134.6 589.5,136.2 589.0,137.8 588.5,139.4 588.0,140.4 587.5,137.6 587.0,132.8 586.5,119.5 586.0,113.2 585.5,113.6 585.0,114.0 584.5,114.3 584.0,114.7 583.5,115.1 583.0,115.5 582.5,115.8 582.0,116.1 581.5,116.5 581.0,116.8 580.5,117.1 580.0,117.4 579.5,118.3 579.0,120.9 578.5,123.5 578.0,126.2 577.5,127.4 577.0,127.7 576.5,128.0 576.0,128.3 575.5,127.1 575.0,125.9 574.5,124.6 574.0,123.4 573.5,122.1 573.0,122.0 572.5,122.3 572.0,122.5 571.5,122.8 571.0,123.0 570.5,123.2 570.0,123.5 569.5,124.0 569.0,124.6 568.5,125.3 568.0,126.0 567.5,126.7 567.0,127.4 566.5,127.6 566.0,127.2 565.5,126.8 565.0,126.5 564.5,126.1 564.0,120.0 563.5,110.9 563.0,111.1 562.5,111.6 562.0,112.2 561.5,112.7 561.0,113.2 560.5,113.7 560.0,114.3 559.5,114.9 559.0,115.6 558.5,116.2 558.0,116.9 557.5,117.6 557.0,118.2 556.5,118.9 556.0,120.3 555.5,121.8 555.0,123.3 554.5,124.7 554.0,126.0 553.5,126.0 553.0,126.0 552.5,126.0 552.0,126.0 551.5,126.0 551.0,126.0 550.5,126.0 550.0,126.0 549.5,126.0 549.0,126.3 548.5,126.9 548.0,127.4 547.5,128.0 547.0,128.6 546.5,129.2 546.0,130.6 545.5,132.9 545.0,135.2 544.5,137.5 544.0,135.6 543.5,133.0 543.0,130.3 542.5,126.6 542.0,119.3 541.5,111.9 541.0,111.1 540.5,111.7 540.0,112.3 539.5,112.8 539.0,113.4 538.5,114.0 538.0,114.7 537.5,115.3 537.0,116.0 536.5,116.6 536.0,117.3 535.5,117.9 535.0,118.6 534.5,120.0 534.0,121.9 533.5,123.9 533.0,125.8 532.5,127.8 532.0,127.6 531.5,126.6 531.0,125.7 530.5,124.7 530.0,123.7 529.5,123.9 529.0,124.2 528.5,124.6 528.0,124.9 527.5,125.2 527.0,125.5 526.5,125.9 526.0,126.8 525.5,128.0 525.0,129.2 524.5,130.5 524.0,131.7 523.5,132.3 523.0,132.8 522.5,133.3 522.0,133.8 521.5,134.2 521.0,133.0 520.5,131.8 520.0,129.3 519.5,117.7 519.0,108.3 518.5,108.6 518.0,109.0 517.5,109.3 517.0,109.6 516.5,109.9 516.0,110.3 515.5,110.6 515.0,111.4 514.5,112.2 514.0,113.0 513.5,113.8 513.0,114.6 512.5,115.5 512.0,116.3 511.5,118.6 511.0,121.5 510.5,124.5 510.0,127.1 509.5,126.1 509.0,126.3 508.5,126.7 508.0,127.0 507.5,127.4 507.0,127.8 506.5,128.1 506.0,128.5 505.5,128.9 505.0,129.2 504.5,129.9 504.0,131.3 503.5,132.8 503.0,134.3 502.5,135.7 502.0,137.0 501.5,138.0 501.0,139.0 500.5,139.6 500.0,140.2 499.5,140.5 499.0,138.7 498.5,137.0 498.0,122.6 497.5,114.3 497.0,114.6 496.5,114.9 496.0,115.1 495.5,115.4 495.0,115.7 494.5,116.0 494.0,116.3 493.5,116.6 493.0,117.1 492.5,117.5 492.0,118.0 491.5,118.5 491.0,119.0 490.5,119.5 490.0,120.0 489.5,121.5 489.0,123.3 488.5,125.0 488.0,126.7 487.5,128.3 487.0,127.7 486.5,127.1 486.0,126.5 485.5,125.9 485.0,125.2 484.5,124.6 484.0,124.0 483.5,123.4 483.0,122.8 482.5,122.7 482.0,123.3 481.5,124.0 481.0,124.6 480.5,125.3 480.0,125.9 479.5,126.6 479.0,127.1 478.5,126.7 478.0,126.3 477.5,125.9 477.0,125.5 476.5,125.1 476.0,124.1 475.5,118.2 475.0,112.3 474.5,110.9 474.0,111.3 473.5,111.7 473.0,112.2 472.5,112.6 472.0,113.0 471.5,113.4 471.0,113.8 470.5,114.4 470.0,115.2 469.5,116.0 469.0,116.8 468.5,117.6 468.0,118.4 467.5,119.3 467.0,120.1 466.5,121.1 466.0,122.0 465.5,123.0 465.0,124.0 464.5,124.8 464.0,125.0 463.5,125.1 463.0,125.3 462.5,125.5 462.0,125.6 461.5,125.8 461.0,126.0 460.5,126.5 460.0,127.1 459.5,127.7 459.0,128.3 458.5,128.9 458.0,129.5 457.5,132.2 457.0,135.0 456.5,137.8 456.0,136.7 455.5,134.5 455.0,132.3 454.5,130.2 454.0,118.6 453.5,110.7 453.0,111.0 452.5,111.2 452.0,111.5 451.5,111.7 451.0,112.2 450.5,112.7 450.0,113.3 449.5,113.9 449.0,114.5 448.5,115.0 448.0,115.6 447.5,116.3 447.0,117.1 446.5,118.0 446.0,118.9 445.5,119.7 445.0,121.4 444.5,123.7 444.0,126.0 443.5,128.3 443.0,127.8 442.5,127.2 442.0,126.6 441.5,126.0 441.0,125.4 440.5,124.8 440.0,125.3 439.5,125.7 439.0,126.2 438.5,126.7 438.0,127.2 437.5,127.7 437.0,128.2 436.5,128.7 436.0,129.2 435.5,129.8 435.0,130.8 434.5,131.8 434.0,132.8 433.5,133.7 433.0,133.7 432.5,132.4 432.0,131.2 431.5,123.8 431.0,111.8 430.5,107.9 430.0,108.3 429.5,108.6 429.0,109.0 428.5,109.4 428.0,109.8 427.5,110.3 427.0,110.8 426.5,111.3 426.0,111.8 425.5,113.4 425.0,114.9 424.5,116.5 424.0,118.1 423.5,119.7 423.0,121.2 422.5,122.6 422.0,124.1 421.5,125.6 421.0,127.0 420.5,127.4 420.0,127.6 419.5,127.9 419.0,128.1 418.5,128.4 418.0,128.6 417.5,128.9 417.0,129.1 416.5,129.3 416.0,129.8 415.5,131.0 415.0,132.2 414.5,133.4 414.0,134.5 413.5,135.7 413.0,136.9 412.5,137.8 412.0,138.8 411.5,139.8 411.0,138.9 410.5,137.0 410.0,133.3 409.5,123.5 409.0,113.7 408.5,112.0 408.0,112.4 407.5,112.7 407.0,113.0 406.5,113.4 406.0,113.7 405.5,114.0 405.0,114.4 404.5,114.9 404.0,115.4 403.5,115.9 403.0,116.4 402.5,116.9 402.0,117.4 401.5,118.4 401.0,120.6 400.5,122.8 400.0,125.0 399.5,127.2 399.0,127.8 398.5,126.9 398.0,125.9 397.5,124.9 397.0,123.9 396.5,122.9 396.0,122.0 395.5,121.3 395.0,121.4 394.5,121.6 394.0,121.8 393.5,121.9 393.0,122.1 392.5,122.3 392.0,122.4 391.5,123.3 391.0,124.2 390.5,125.1 390.0,126.0 389.5,126.9 389.0,127.7 388.5,127.6 388.0,127.4 387.5,127.2 387.0,119.9 386.5,113.0 386.0,113.4 385.5,113.8 385.0,114.2 384.5,114.6 384.0,115.0 383.5,115.4 383.0,116.0 382.5,116.5 382.0,117.1 381.5,117.6 381.0,118.2 380.5,118.8 380.0,119.3 379.5,119.9 379.0,121.1 378.5,122.6 378.0,124.0 377.5,125.5 377.0,127.0 376.5,126.0 376.0,124.7 375.5,123.4 375.0,122.6 374.5,123.2 374.0,123.8 373.5,124.5 373.0,125.1 372.5,125.7 372.0,126.4 371.5,127.0 371.0,127.6 370.5,128.1 370.0,128.6 369.5,129.1 369.0,130.1 368.5,132.9 368.0,135.8 367.5,137.3 367.0,135.7 366.5,134.0 366.0,132.4 365.5,130.8 365.0,121.1 364.5,111.2 364.0,111.4 363.5,111.6 363.0,111.9 362.5,112.6 362.0,113.3 361.5,114.1 361.0,114.8 360.5,115.6 360.0,116.3 359.5,117.0 359.0,117.8 358.5,118.5 358.0,119.3 357.5,120.1 357.0,120.9 356.5,121.7 356.0,122.5 355.5,123.3 355.0,124.2 354.5,124.8 354.0,125.0 353.5,125.2 353.0,125.3 352.5,125.5 352.0,125.6 351.5,125.8 351.0,126.0 350.5,126.3 350.0,126.6 349.5,127.0 349.0,127.3 348.5,127.7 348.0,128.5 347.5,129.5 347.0,130.4 346.5,131.2 346.0,130.4 345.5,129.6 345.0,128.8 344.5,128.0 344.0,127.3 343.5,125.1 343.0,110.9 342.5,109.0 342.0,108.5 341.5,108.6 341.0,109.3 340.5,110.0 340.0,110.7 339.5,111.4 339.0,112.1 338.5,112.8 338.0,113.5 337.5,114.2 337.0,115.0 336.5,115.8 336.0,116.6 335.5,117.4 335.0,118.3 334.5,119.1 334.0,119.9 333.5,120.5 333.0,120.9 332.5,121.4 332.0,121.9 331.5,122.4 331.0,122.9 330.5,123.4 330.0,124.2 329.5,125.1 329.0,126.1 328.5,127.1 328.0,128.1 327.5,129.1 327.0,130.0 326.5,131.1 326.0,132.3 325.5,133.6 325.0,134.8 324.5,136.0 324.0,136.1 323.5,135.1 323.0,134.1 322.5,133.1 322.0,132.1 321.5,129.4 321.0,120.0 320.5,113.0 320.0,113.3 319.5,113.5 319.0,113.8 318.5,114.0 318.0,114.3 317.5,114.8 317.0,115.2 316.5,115.6 316.0,116.1 315.5,116.5 315.0,116.9 314.5,117.3 314.0,117.8 313.5,118.2 313.0,118.7 312.5,119.2 312.0,119.7 311.5,120.1 311.0,120.6 310.5,121.1 310.0,121.6 309.5,121.9 309.0,122.0 308.5,122.1 308.0,122.3 307.5,122.4 307.0,122.5 306.5,122.6 306.0,122.8 305.5,122.9 305.0,123.0 304.5,123.3 304.0,123.6 303.5,123.9 303.0,124.2 302.5,124.5 302.0,124.8 301.5,123.9 301.0,123.0 300.5,122.0 300.0,121.5 299.5,122.5 299.0,123.5 298.5,121.7 298.0,114.6 297.5,110.7 297.0,111.0 296.5,111.3 296.0,111.6 295.5,111.9 295.0,112.2 294.5,112.5 294.0,112.8 293.5,113.1 293.0,113.4 292.5,113.7 292.0,114.0 291.5,114.4 291.0,115.0 290.5,115.7 290.0,116.3 289.5,117.0 289.0,117.7 288.5,118.3 288.0,119.0 287.5,119.6 287.0,120.3 286.5,120.9 286.0,121.6 285.5,122.2 285.0,122.9 284.5,123.5 284.0,124.1 283.5,124.7 283.0,125.3 282.5,125.9 282.0,126.5 281.5,127.1 281.0,129.5 280.5,132.2 280.0,133.3 279.5,132.5 279.0,131.7 278.5,130.8 278.0,131.0 277.5,131.4 277.0,131.9 276.5,122.2 276.0,111.8 275.5,112.5 275.0,113.1 274.5,113.8 274.0,114.5 273.5,115.2 273.0,115.7 272.5,116.2 272.0,116.7 271.5,117.2 271.0,117.7 270.5,118.2 270.0,118.6 269.5,119.1 269.0,119.6 268.5,120.2 268.0,121.2 267.5,122.3 267.0,123.4 266.5,124.5 266.0,125.6 265.5,126.6 265.0,126.4 264.5,126.2 264.0,126.1 263.5,126.1 263.0,126.3 262.5,126.6 262.0,126.8 261.5,127.1 261.0,127.1 260.5,126.9 260.0,126.7 259.5,126.6 259.0,126.4 258.5,126.2 258.0,126.1 257.5,125.7 257.0,125.2 256.5,124.6 256.0,124.0 255.5,123.4 255.0,122.8 254.5,119.4 254.0,110.8 253.5,105.9 253.0,105.9 252.5,106.5 252.0,107.3 251.5,108.1 251.0,108.9 250.5,109.7 250.0,110.6 249.5,111.4 249.0,112.2 248.5,113.1 248.0,113.9 247.5,114.8 247.0,115.6 246.5,116.5 246.0,117.4 245.5,118.2 245.0,119.1 244.5,119.9 244.0,120.9 243.5,121.9 243.0,122.9 242.5,123.8 242.0,124.8 241.5,125.8 241.0,126.8 240.5,127.9 240.0,129.0 239.5,130.1 239.0,131.3 238.5,132.4 238.0,133.6 237.5,134.7 237.0,135.7 236.5,136.3 236.0,137.0 235.5,137.6 235.0,136.6 234.5,134.9 234.0,133.3 233.5,130.6 233.0,121.4 232.5,114.0 232.0,113.3 231.5,113.3 231.0,113.9 230.5,114.4 230.0,115.0 229.5,115.6 229.0,116.2 228.5,116.7 228.0,117.0 227.5,117.3 227.0,117.6 226.5,117.9 226.0,118.2 225.5,118.5 225.0,118.8 224.5,119.1 224.0,119.4 223.5,120.0 223.0,120.7 222.5,121.3 222.0,121.8 221.5,121.5 221.0,121.3 220.5,120.9 220.0,120.5 219.5,120.1 219.0,119.8 218.5,119.4 218.0,119.0 217.5,118.8 217.0,118.7 216.5,118.7 216.0,118.6 215.5,118.5 215.0,118.4 214.5,118.3 214.0,118.7 213.5,119.3 213.0,120.0 212.5,120.7 212.0,122.0 211.5,125.8 211.0,125.8 210.5,121.9 210.0,115.2 209.5,110.9 209.0,111.6 208.5,112.3 208.0,113.0 207.5,113.7 207.0,114.4 206.5,115.1 206.0,115.8 205.5,116.5 205.0,117.2 204.5,117.9 204.0,118.9 203.5,119.9 203.0,120.9 202.5,121.8 202.0,122.8 201.5,123.8 201.0,124.8 200.5,125.6 200.0,126.4 199.5,127.2 199.0,127.9 198.5,128.7 198.0,129.4 197.5,130.0 197.0,130.6 196.5,131.2 196.0,131.8 195.5,131.9 195.0,131.9 194.5,131.9 194.0,131.9 193.5,131.8 193.0,131.0 192.5,130.2 192.0,129.3 191.5,128.5 191.0,127.7 190.5,126.9 190.0,126.1 189.5,123.4 189.0,120.5 188.5,117.5 188.0,114.6 187.5,111.8 187.0,111.0 186.5,110.3 186.0,109.6 185.5,108.8 185.0,108.2 184.5,108.2 184.0,108.2 183.5,108.2 183.0,108.2 182.5,108.2 182.0,108.2 181.5,108.2 181.0,109.0 180.5,109.7 180.0,110.4 179.5,111.2 179.0,112.0 178.5,113.3 178.0,114.6 177.5,115.9 177.0,117.2 176.5,118.5 176.0,119.8 175.5,121.1 175.0,122.8 174.5,124.5 174.0,126.2 173.5,128.0 173.0,129.6 172.5,131.0 172.0,132.4 171.5,133.8 171.0,135.1 170.5,136.5 170.0,137.8 169.5,138.5 169.0,139.1 168.5,139.8 168.0,139.7 167.5,138.7 167.0,137.6 166.5,131.0 166.0,124.4 165.5,121.7 165.0,121.4 164.5,121.3 164.0,121.8 163.5,122.3 163.0,122.8 162.5,123.3 162.0,123.8 161.5,124.3 161.0,124.8 160.5,125.4 160.0,126.0 159.5,126.7 159.0,127.3 158.5,127.9 158.0,128.5 157.5,129.2 157.0,129.8 156.5,130.5 156.0,131.3 155.5,132.2 155.0,133.0 154.5,132.9 154.0,132.7 153.5,132.5 153.0,132.3 152.5,132.1 152.0,131.9 151.5,131.6 151.0,131.3 150.5,130.9 150.0,130.5 149.5,129.7 149.0,128.9 148.5,128.2 148.0,127.4 147.5,126.6 147.0,125.6 146.5,124.0 146.0,122.3 145.5,120.7 145.0,118.6 144.5,116.1 144.0,121.1 143.5,115.8 143.0,116.4 142.5,116.7 142.0,116.9 141.5,117.2 141.0,117.4 140.5,117.7 140.0,117.9 139.5,118.2 139.0,118.4 138.5,118.7 138.0,118.9 137.5,119.2 137.0,119.4 136.5,119.6 136.0,119.9 135.5,120.2 135.0,120.5 134.5,120.8 134.0,121.1 133.5,121.4 133.0,121.7 132.5,122.0 132.0,122.3 131.5,122.6 131.0,122.9 130.5,123.2 130.0,123.6 129.5,123.9 129.0,124.2 128.5,124.5 128.0,124.9 127.5,125.2 127.0,125.4" fill="#777777"/>
 <path d="M127.5 77.2V124.9M128.5 97.3V105.2M129.5 86.5V114.8M130.5 98.2V104.2M131.5 90.2V112.6M132.5 87.9V114.6M133.5 85.6V118.3M134.5 92.3V111.0M135.5 82.1V119.2M136.5 94.1V108.0M137.5 88.7V112.8M138.5 98.7V103.8M139.5 93.9V108.1M140.5 94.2V108.7M141.5 94.9V107.4M142.5 97.1V105.6M143.5 97.2V105.5M144.5 88.7V114.5M145.5 96.7V106.4M146.5 87.7V116.0M147.5 98.5V103.9M148.5 75.2V126.7M149.5 76.0V128.6M150.5 82.7V119.2M151.5 72.6V127.4M152.5 75.9V128.8M153.5 92.7V109.6M154.5 95.0V107.6M155.5 91.1V110.7M156.5 94.3V108.2M157.5 89.8V112.7M158.5 85.8V115.5M159.5 80.5V123.5M160.5 97.2V105.0M161.5 93.5V108.5M162.5 86.1V115.1M163.5 83.9V117.9M164.5 86.7V116.3M165.5 93.5V108.7M166.5 94.1V107.9M167.5 84.9V117.2M168.5 79.2V122.1M169.5 95.2V108.0M170.5 87.2V116.8M171.5 73.3V130.5M172.5 84.6V116.3M173.5 79.7V122.8M174.5 82.6V121.8M175.5 87.4V114.4M176.5 91.2V111.3M177.5 99.0V103.4M178.5 89.9V113.2M179.5 93.5V109.0M180.5 94.8V108.4M181.5 94.4V108.5M182.5 97.3V105.1M183.5 94.4V108.1M184.5 100.4V102.3M185.5 99.8V102.8M186.5 99.8V102.8M187.5 91.5V110.8M188.5 93.6V108.9M189.5 97.9V105.0M190.5 93.0V109.0M191.5 99.0V103.4M192.5 81.2V121.5M193.5 87.2V114.6M194.5 73.7V127.5M195.5 97.8V104.7M196.5 85.2V116.6M197.5 87.2V115.8M198.5 75.3V128.5M199.5 88.5V115.0M200.5 90.5V113.1M201.5 85.7V116.6M202.5 81.2V122.0M203.5 99.6V103.1M204.5 94.0V109.0M205.5 85.4V116.5M206.5 87.1V114.6M207.5 97.3V105.0M208.5 94.8V108.0M209.5 95.1V108.1M210.5 81.1V122.7M211.5 95.4V107.5M212.5 81.8V120.5M213.5 97.0V105.2M214.5 94.9V108.2M215.5 84.7V118.3M216.5 89.3V113.5M217.5 93.3V108.7M218.5 87.9V115.1M219.5 85.7V117.8M220.5 98.9V103.5M221.5 98.6V104.0M222.5 85.3V118.3M223.5 93.8V108.9M224.5 95.3V107.3M225.5 85.4V118.6M226.5 97.1V105.7M227.5 85.5V118.4M228.5 94.7V107.4M229.5 98.1V104.6M230.5 95.0V107.3M231.5 98.7V103.8M232.5 92.5V111.0M233.5 92.4V109.5M234.5 89.9V111.7M235.5 67.0V134.4M236.5 82.3V121.6M237.5 78.2V122.8M238.5 79.4V124.0M239.5 72.1V132.9M240.5 91.7V110.2M241.5 92.4V110.6M242.5 99.4V103.2M243.5 80.3V122.3M244.5 98.3V104.5M245.5 96.0V106.5M246.5 96.6V105.8M247.5 98.1V104.4M248.5 91.2V111.9M249.5 100.4V102.3M250.5 96.8V105.5M251.5 95.1V107.7M252.5 99.6V102.9M253.5 99.5V103.0M254.5 88.5V114.9M255.5 78.1V123.1M256.5 93.1V109.3M257.5 76.0V129.1M258.5 79.3V124.7M259.5 91.3V111.3M260.5 79.6V121.5M261.5 77.6V123.5M262.5 77.2V125.9M263.5 96.4V106.1M264.5 85.5V117.6M265.5 87.3V116.1M266.5 86.8V116.7M267.5 89.4V112.2M268.5 88.5V114.5M269.5 88.9V112.9M270.5 94.9V107.6M271.5 84.8V117.8M272.5 91.8V110.7M273.5 90.4V111.1M274.5 95.5V106.9M275.5 99.7V102.8M276.5 83.5V119.3M277.5 74.3V128.9M278.5 87.7V114.6M279.5 97.5V105.4M280.5 89.4V112.1M281.5 97.0V105.9M282.5 85.4V116.8M283.5 81.3V119.9M284.5 79.3V122.3M285.5 97.9V104.4M286.5 93.6V108.6M287.5 99.1V103.4M288.5 87.6V115.7M289.5 97.4V105.0M290.5 94.9V108.1M291.5 94.6V107.5M292.5 94.3V108.0M293.5 99.0V103.8M294.5 99.8V102.9M295.5 92.2V111.2M296.5 94.9V107.3M297.5 93.5V108.6M298.5 89.3V113.0M299.5 99.2V103.5M300.5 79.6V120.9M301.5 80.1V124.4M302.5 92.3V110.4M303.5 95.1V106.9M304.5 87.8V114.0M305.5 79.7V122.4M306.5 79.3V121.4M307.5 98.5V104.1M308.5 83.7V120.4M309.5 87.1V114.8M310.5 97.5V105.0M311.5 91.6V111.0M312.5 90.3V113.1M313.5 83.9V118.4M314.5 98.9V103.8M315.5 97.0V105.6M316.5 91.9V110.7M317.5 92.3V110.5M318.5 96.2V106.7M319.5 96.7V105.9M320.5 89.4V113.6M321.5 77.8V126.6M322.5 77.2V126.9M323.5 84.9V116.3M324.5 84.5V119.1M325.5 80.5V121.7M326.5 84.6V117.9M327.5 97.3V105.0M328.5 91.2V112.2M329.5 93.7V108.8M330.5 99.0V103.8M331.5 91.2V110.5M332.5 99.2V103.6M333.5 95.8V107.3M334.5 97.7V105.1M335.5 89.6V113.2M336.5 96.8V105.5M337.5 89.4V112.3M338.5 92.1V110.9M339.5 95.6V107.1M340.5 94.8V107.2M341.5 97.9V104.9M342.5 95.6V107.4M343.5 86.7V115.2M344.5 86.4V116.2M345.5 80.2V120.9M346.5 88.3V113.5M347.5 72.4V128.2M348.5 73.8V129.1M349.5 92.0V110.8M350.5 80.0V124.0M351.5 93.8V108.3M352.5 89.8V111.8M353.5 94.9V108.0M354.5 97.9V104.3M355.5 95.3V106.8M356.5 86.5V116.3M357.5 87.6V114.6M358.5 96.1V107.0M359.5 98.6V104.1M360.5 93.1V110.1M361.5 99.5V103.0M362.5 90.7V111.2M363.5 94.4V107.6M364.5 99.1V103.7M365.5 71.0V132.8M366.5 93.2V109.2M367.5 90.4V111.7M368.5 81.1V121.6M369.5 83.4V117.7M370.5 97.5V105.0M371.5 76.8V126.6M372.5 85.3V116.2M373.5 78.5V124.5M374.5 91.8V111.3M375.5 99.1V103.3M376.5 94.7V107.9M377.5 91.7V111.6M378.5 98.6V104.0M379.5 84.5V117.6M380.5 92.1V110.1M381.5 91.3V110.7M382.5 97.8V104.5M383.5 91.0V110.6M384.5 99.4V103.2M385.5 95.9V106.5M386.5 98.5V104.3M387.5 98.0V104.8M388.5 75.7V125.1M389.5 81.3V122.9M390.5 77.0V127.8M391.5 83.6V119.0M392.5 98.6V104.2M393.5 91.1V112.4M394.5 83.2V120.0M395.5 93.3V109.5M396.5 81.1V120.9M397.5 87.3V115.2M398.5 82.3V118.9M399.5 91.0V111.3M400.5 94.2V107.8M401.5 91.7V111.2M402.5 89.1V113.0M403.5 96.0V106.9M404.5 95.2V107.6M405.5 91.5V110.9M406.5 96.8V105.6M407.5 92.7V109.8M408.5 93.4V108.9M409.5 93.9V108.3M410.5 72.9V126.9M411.5 87.8V115.6M412.5 76.5V125.7M413.5 71.5V131.1M414.5 72.5V131.3M415.5 74.4V126.3M416.5 89.9V112.5M417.5 93.6V108.6M418.5 95.4V106.9M419.5 90.2V113.4M420.5 90.8V111.6M421.5 86.2V117.3M422.5 99.5V103.2M423.5 91.4V110.6M424.5 92.1V110.0M425.5 99.3V103.3M426.5 92.5V110.7M427.5 97.0V105.3M428.5 94.7V108.1M429.5 97.8V105.0M430.5 95.7V107.3M431.5 79.9V120.8M432.5 98.6V104.0M433.5 86.1V116.4M434.5 95.2V107.6M435.5 94.3V108.1M436.5 94.0V109.1M437.5 79.7V123.7M438.5 90.2V113.5M439.5 76.6V125.9M440.5 87.7V116.3M441.5 90.1V113.6M442.5 81.9V122.3M443.5 90.9V112.6M444.5 93.6V108.5M445.5 84.5V117.8M446.5 94.1V109.1M447.5 89.6V114.0M448.5 91.2V112.2M449.5 91.3V111.9M450.5 90.5V111.3M451.5 96.8V105.9M452.5 92.3V109.9M453.5 91.5V111.3M454.5 95.8V106.5M455.5 75.4V125.8M456.5 67.3V138.7M457.5 75.8V124.6M458.5 72.8V131.3M459.5 96.4V106.4M460.5 80.0V122.5M461.5 90.0V112.3M462.5 99.0V103.4M463.5 81.1V120.3M464.5 90.6V111.2M465.5 83.3V119.5M466.5 96.9V106.0M467.5 85.7V115.5M468.5 89.7V113.8M469.5 92.8V110.6M470.5 89.7V112.9M471.5 97.8V104.9M472.5 99.4V103.1M473.5 90.4V112.7M474.5 93.4V108.5M475.5 94.2V108.2M476.5 91.7V111.4M477.5 76.8V125.9M478.5 88.3V114.8M479.5 95.7V106.4M480.5 77.7V124.7M481.5 78.7V123.2M482.5 98.6V104.0M483.5 98.1V104.2M484.5 87.0V114.7M485.5 92.4V110.0M486.5 93.1V110.1M487.5 96.0V106.5M488.5 93.8V108.5M489.5 94.9V107.3M490.5 85.8V115.6M491.5 88.9V113.8M492.5 89.5V113.4M493.5 97.2V105.6M494.5 95.6V107.3M495.5 99.8V102.7M496.5 98.4V104.1M497.5 95.0V107.0M498.5 82.8V119.8M499.5 61.2V139.0M500.5 72.6V128.4M501.5 63.9V136.5M502.5 86.0V117.3M503.5 95.2V107.4M504.5 79.3V123.1M505.5 91.2V111.5M506.5 80.0V121.6M507.5 98.6V103.8M508.5 86.3V115.8M509.5 92.9V109.3M510.5 81.4V122.1M511.5 87.1V116.4M512.5 89.0V112.6M513.5 94.5V108.5M514.5 97.3V105.4M515.5 94.3V108.5M516.5 96.3V106.3M517.5 96.5V106.4M518.5 99.8V102.8M519.5 89.2V113.5M520.5 71.8V130.6M521.5 72.3V131.4M522.5 98.4V104.4M523.5 80.0V122.1M524.5 75.6V127.8M525.5 89.2V114.3M526.5 95.9V107.1M527.5 78.2V122.2M528.5 94.9V107.7M529.5 85.3V118.5M530.5 85.9V117.7M531.5 87.8V115.0M532.5 85.5V118.1M533.5 91.3V112.1M534.5 94.3V108.1M535.5 90.8V112.4M536.5 96.8V105.4M537.5 97.9V104.9M538.5 88.7V112.7M539.5 96.6V106.3M540.5 96.2V106.7M541.5 94.3V107.8M542.5 83.2V119.3M543.5 89.5V113.3M544.5 78.8V124.5M545.5 70.0V133.5M546.5 97.0V105.4M547.5 92.2V110.8M548.5 80.9V121.4M549.5 90.6V113.1M550.5 82.2V119.1M551.5 84.0V119.2M552.5 86.8V114.3M553.5 83.2V119.8M554.5 86.2V117.6M555.5 87.8V113.8M556.5 92.3V110.7M557.5 85.0V119.3M558.5 88.2V113.9M559.5 95.2V107.1M560.5 92.4V110.8M561.5 95.1V107.9M562.5 99.8V102.7M563.5 91.9V111.4M564.5 91.3V111.0M565.5 87.8V114.4M566.5 81.9V120.1M567.5 92.1V109.8M568.5 99.0V103.4M569.5 78.2V125.2M570.5 79.0V125.8M571.5 91.7V110.6M572.5 87.5V115.9M573.5 89.5V113.1M574.5 91.7V111.4M575.5 80.1V121.8M576.5 80.6V121.7M577.5 80.2V123.7M578.5 94.6V107.8M579.5 84.6V116.7M580.5 86.2V115.3M581.5 94.6V108.3M582.5 98.9V103.6M583.5 87.3V115.5M584.5 98.7V104.0M585.5 95.5V107.4M586.5 93.4V109.5M587.5 86.3V115.1M588.5 66.5V138.6M589.5 90.1V111.5M590.5 87.2V116.2M591.5 73.2V127.3M592.5 92.5V110.7M593.5 97.8V104.7M594.5 87.8V116.0M595.5 92.1V110.9M596.5 77.9V125.2M597.5 82.8V118.5M598.5 93.4V109.6M599.5 91.9V109.9M600.5 92.5V110.3M601.5 92.5V109.5M602.5 98.1V104.7M603.5 99.5V103.2M604.5 94.5V107.6M605.5 92.9V110.5M606.5 100.2V102.4M607.5 98.9V103.8M608.5 92.8V109.2M609.5 74.0V126.9M610.5 89.6V113.2M611.5 76.8V124.2M612.5 79.1V125.5M613.5 85.7V115.7M614.5 94.8V107.6M615.5 93.2V108.7M616.5 93.6V109.5M617.5 75.8V125.4M618.5 89.4V112.8M619.5 93.5V108.4M620.5 98.9V103.8M621.5 81.1V121.3M622.5 92.3V110.0M623.5 98.8V103.9M624.5 90.7V112.2M625.5 94.8V107.5M626.5 95.8V106.8M627.5 94.0V108.4M628.5 90.7V111.8M629.5 98.3V104.3M630.5 92.4V111.1M631.5 82.8V120.4M632.5 75.9V127.1M633.5 86.1V116.1M634.5 66.0V139.7M635.5 95.2V107.7M636.5 82.0V118.9M637.5 90.0V111.8M638.5 83.3V120.9M639.5 92.5V110.3M640.5 97.3V105.0M641.5 90.0V112.1M642.5 75.8V126.1M643.5 81.4V121.2M644.5 84.1V118.0M645.5 96.1V106.3M646.5 95.5V107.6M647.5 97.3V105.0M648.5 98.1V104.4M649.5 97.3V105.6M650.5 99.6V103.0M651.5 95.5V107.0M652.5 94.2V108.4M653.5 84.9V119.0M654.5 79.4V122.1M655.5 93.4V109.5M656.5 98.7V103.8M657.5 91.6V110.2M658.5 86.6V114.9M659.5 97.1V105.8M660.5 85.9V117.7M661.5 82.8V118.7M662.5 98.0V104.7M663.5 80.3V122.9M664.5 92.1V111.2M665.5 93.7V109.2M666.5 83.2V121.0M667.5 92.5V110.8M668.5 93.6V108.3M669.5 95.6V106.6M670.5 98.7V103.7M671.5 93.6V109.8M672.5 97.3V105.5M673.5 99.2V103.3M674.5 97.3V105.3M675.5 80.8V122.4M676.5 89.4V113.9M677.5 87.2V116.0M678.5 95.7V107.3M679.5 75.4V127.1M680.5 74.4V127.0M681.5 95.1V107.0M682.5 98.9V103.7M683.5 86.3V116.1M684.5 85.9V117.6M685.5 83.8V117.4M686.5 77.4V124.6M687.5 96.4V105.8M688.5 92.6V109.3M689.5 83.0V118.1M690.5 87.5V115.0M691.5 86.9V116.9M692.5 94.2V108.4M693.5 91.3V110.8M694.5 96.3V106.1M695.5 93.5V109.6M696.5 99.0V103.4M697.5 89.4V112.3M698.5 70.9V129.9M699.5 95.1V107.7M700.5 81.0V121.2M701.5 96.3V105.8M702.5 74.4V130.4M703.5 93.0V110.1M704.5 81.0V121.4M705.5 86.7V116.5M706.5 88.7V114.7M707.5 90.9V111.9M708.5 85.8V117.9M709.5 76.6V124.3M710.5 93.0V110.2M711.5 91.5V111.2M712.5 87.0V116.2M713.5 92.2V111.0M714.5 87.6V116.0M715.5 88.6V112.9M716.5 93.7V109.5M717.5 98.8V103.7M718.5 96.6V105.8M719.5 87.2V116.2M720.5 74.2V128.7M721.5 73.3V128.6M722.5 88.9V112.6M723.5 98.1V104.7M724.5 83.2V120.5M725.5 79.2V121.2M726.5 85.6V117.9M727.5 85.7V117.0M728.5 85.1V116.9M729.5 78.1V126.5M730.5 93.6V108.3M731.5 90.0V113.1M732.5 81.0V123.0M733.5 82.5V121.5M734.5 97.0V106.0M735.5 85.9V115.4M736.5 96.6V106.0M737.5 99.6V103.0M738.5 91.5V112.0M739.5 94.6V108.5M740.5 99.7V103.0M741.5 94.7V107.4M742.5 95.2V107.3M743.5 89.5V112.2M744.5 83.5V119.9M745.5 97.6V104.7M746.5 89.6V112.8" stroke="#f4f4f4" stroke-opacity="0.15" stroke-width="1"/><path d="M127.5 98.2V104.6M128.5 80.6V120.5M129.5 94.6V108.1M130.5 95.1V107.7M131.5 98.0V104.6M132.5 82.6V121.7M133.5 92.8V110.5M134.5 98.2V104.4M135.5 96.5V105.8M136.5 84.4V119.8M137.5 98.7V103.8M138.5 93.5V109.3M139.5 85.9V118.2M140.5 85.3V118.1M141.5 87.4V116.6M142.5 94.8V108.2M143.5 87.4V116.2M144.5 93.1V108.9M145.5 99.2V103.4M146.5 89.8V113.6M147.5 86.8V116.5M148.5 87.1V115.8M149.5 95.3V106.8M150.5 83.8V119.0M151.5 93.1V108.7M152.5 85.4V117.5M153.5 83.2V120.5M154.5 96.5V105.9M155.5 84.6V118.8M156.5 84.1V117.9M157.5 79.8V122.3M158.5 73.4V130.8M159.5 78.1V125.3M160.5 83.1V119.2M161.5 99.2V103.6M162.5 84.2V119.9M163.5 89.3V112.5M164.5 86.8V116.0M165.5 95.1V107.2M166.5 74.4V130.2M167.5 62.1V139.1M168.5 79.1V121.3M169.5 67.2V133.1M170.5 93.3V109.7M171.5 68.3V135.3M172.5 75.7V128.2M173.5 78.0V126.2M174.5 88.2V114.1M175.5 88.0V114.1M176.5 92.0V109.9M177.5 89.4V112.6M178.5 97.6V105.3M179.5 96.9V105.4M180.5 98.2V104.3M181.5 94.9V107.4M182.5 98.2V104.7M183.5 96.6V105.7M184.5 99.9V102.7M185.5 100.1V102.5M186.5 99.8V102.8M187.5 92.8V109.3M188.5 84.8V119.0M189.5 79.4V123.3M190.5 95.3V107.3M191.5 83.9V117.1M192.5 86.6V116.8M193.5 80.9V119.7M194.5 83.0V119.7M195.5 86.2V116.9M196.5 72.8V127.6M197.5 72.3V128.3M198.5 72.3V132.9M199.5 85.0V118.5M200.5 94.7V107.7M201.5 91.2V111.3M202.5 80.6V120.0M203.5 94.3V108.6M204.5 98.7V103.8M205.5 98.8V103.6M206.5 98.4V104.2M207.5 89.6V113.2M208.5 99.3V103.3M209.5 97.0V105.9M210.5 83.1V119.2M211.5 89.4V112.6M212.5 96.7V105.5M213.5 90.1V112.8M214.5 99.2V103.6M215.5 86.0V115.5M216.5 96.6V106.0M217.5 95.6V107.2M218.5 94.1V108.4M219.5 91.3V110.7M220.5 82.0V119.9M221.5 92.2V111.3M222.5 95.9V107.3M223.5 83.2V119.3M224.5 94.3V107.7M225.5 92.3V110.4M226.5 99.2V103.6M227.5 88.5V114.7M228.5 94.7V107.6M229.5 96.3V106.6M230.5 99.5V103.2M231.5 93.2V109.4M232.5 91.2V111.3M233.5 92.2V109.5M234.5 77.6V125.8M235.5 89.8V113.7M236.5 74.5V130.0M237.5 66.6V137.4M238.5 76.3V124.1M239.5 77.6V123.0M240.5 96.6V106.3M241.5 80.4V120.3M242.5 88.6V114.7M243.5 88.0V113.7M244.5 87.1V116.4M245.5 91.1V112.0M246.5 90.5V112.5M247.5 97.7V105.2M248.5 95.3V106.9M249.5 96.2V106.1M250.5 95.6V106.9M251.5 96.4V106.6M252.5 97.3V105.1M253.5 97.2V105.7M254.5 90.6V111.8M255.5 88.4V115.3M256.5 99.1V103.5M257.5 76.3V126.1M258.5 87.8V114.2M259.5 83.8V117.3M260.5 78.4V124.8M261.5 87.8V115.6M262.5 79.9V123.4M263.5 79.2V123.3M264.5 78.7V123.3M265.5 95.7V106.6M266.5 92.8V110.4M267.5 95.6V107.2M268.5 85.2V118.7M269.5 88.3V115.3M270.5 94.7V107.8M271.5 93.6V108.4M272.5 89.2V114.4M273.5 100.0V102.7M274.5 92.9V110.4M275.5 94.1V108.4M276.5 93.6V108.3M277.5 89.7V112.7M278.5 76.6V124.7M279.5 74.0V130.6M280.5 86.8V116.4M281.5 79.7V121.7M282.5 80.5V123.6M283.5 85.7V116.4M284.5 97.4V105.2M285.5 88.2V115.4M286.5 98.0V104.9M287.5 93.5V109.7M288.5 91.9V110.0M289.5 97.8V104.9M290.5 89.2V114.6M291.5 94.9V107.4M292.5 89.3V112.3M293.5 89.1V113.3M294.5 97.2V105.8M295.5 97.5V105.0M296.5 98.7V104.0M297.5 99.3V103.4M298.5 94.0V108.8M299.5 89.7V113.8M300.5 85.4V117.5M301.5 88.5V114.2M302.5 77.7V122.6M303.5 86.2V116.6M304.5 94.6V108.2M305.5 90.6V112.7M306.5 92.0V110.4M307.5 79.8V124.7M308.5 86.7V116.8M309.5 89.1V113.3M310.5 96.4V105.7M311.5 83.4V120.7M312.5 89.2V113.6M313.5 84.6V116.8M314.5 93.1V108.8M315.5 95.9V107.0M316.5 86.6V116.2M317.5 100.1V102.5M318.5 89.8V113.8M319.5 96.6V106.2M320.5 94.3V107.7M321.5 82.8V120.5M322.5 67.9V137.3M323.5 79.8V121.1M324.5 88.0V115.1M325.5 94.8V107.3M326.5 86.3V117.2M327.5 82.1V118.7M328.5 78.6V123.1M329.5 82.6V119.0M330.5 97.6V104.8M331.5 97.0V105.9M332.5 94.9V107.2M333.5 90.3V111.7M334.5 88.0V113.5M335.5 95.1V107.4M336.5 87.4V114.0M337.5 96.8V105.4M338.5 99.9V102.6M339.5 91.3V111.6M340.5 97.9V104.9M341.5 94.8V107.5M342.5 94.8V107.8M343.5 98.0V104.5M344.5 80.6V119.9M345.5 71.8V132.8M346.5 97.1V105.3M347.5 86.7V116.1M348.5 96.3V106.3M349.5 80.8V122.6M350.5 81.1V120.8M351.5 77.2V127.0M352.5 94.2V108.3M353.5 99.3V103.4M354.5 77.3V123.7M355.5 92.5V110.0M356.5 91.2V111.1M357.5 89.1V113.3M358.5 96.5V106.4M359.5 96.1V106.4M360.5 86.9V116.1M361.5 95.6V106.5M362.5 92.1V110.2M363.5 91.3V110.8M364.5 95.3V107.6M365.5 85.9V115.8M366.5 83.6V119.3M367.5 67.4V135.9M368.5 69.1V136.7M369.5 77.4V126.5M370.5 90.6V113.0M371.5 89.0V113.3M372.5 82.1V119.6M373.5 97.6V104.8M374.5 90.3V113.1M375.5 89.8V113.7M376.5 78.1V125.2M377.5 98.7V103.9M378.5 92.6V110.0M379.5 93.2V109.2M380.5 90.9V112.6M381.5 87.5V114.4M382.5 89.1V114.6M383.5 89.0V114.6M384.5 94.9V108.3M385.5 95.1V107.3M386.5 90.4V111.7M387.5 88.1V114.4M388.5 80.2V120.7M389.5 74.7V125.4M390.5 87.1V114.1M391.5 97.1V105.4M392.5 80.0V121.6M393.5 91.8V110.6M394.5 97.9V104.8M395.5 88.9V113.2M396.5 98.2V104.7M397.5 94.3V107.8M398.5 82.6V118.8M399.5 77.2V125.0M400.5 92.0V111.1M401.5 89.5V113.2M402.5 95.1V107.2M403.5 86.9V116.3M404.5 95.8V106.3M405.5 87.9V113.9M406.5 95.7V106.8M407.5 93.8V109.5M408.5 96.3V106.7M409.5 98.4V104.3M410.5 96.0V107.1M411.5 87.2V116.0M412.5 72.3V128.6M413.5 75.8V127.7M414.5 84.8V117.6M415.5 75.6V129.5M416.5 97.9V104.6M417.5 90.9V111.9M418.5 75.4V129.0M419.5 82.0V118.8M420.5 96.4V106.6M421.5 85.2V117.3M422.5 82.1V119.8M423.5 90.2V112.5M424.5 98.6V103.7M425.5 97.6V105.1M426.5 99.8V102.8M427.5 98.4V104.3M428.5 99.1V103.6M429.5 93.7V109.0M430.5 98.8V104.0M431.5 84.9V117.4M432.5 98.3V104.1M433.5 97.6V104.9M434.5 97.6V105.3M435.5 76.2V128.3M436.5 94.7V107.9M437.5 95.7V107.2M438.5 97.8V105.0M439.5 99.1V103.7M440.5 95.4V107.3M441.5 82.1V121.2M442.5 84.3V119.9M443.5 93.9V108.5M444.5 79.5V122.9M445.5 98.4V104.1M446.5 95.6V106.7M447.5 97.6V104.7M448.5 98.4V104.1M449.5 91.9V111.4M450.5 92.5V110.5M451.5 91.4V110.4M452.5 100.5V102.2M453.5 95.0V107.0M454.5 81.1V120.8M455.5 93.0V110.2M456.5 69.6V136.0M457.5 71.7V128.1M458.5 73.4V131.5M459.5 81.3V121.0M460.5 74.8V130.0M461.5 83.5V120.6M462.5 85.5V116.8M463.5 86.0V117.9M464.5 85.8V115.7M465.5 84.2V119.6M466.5 88.1V113.4M467.5 99.0V103.5M468.5 95.8V106.5M469.5 94.6V108.5M470.5 92.3V110.5M471.5 91.6V111.4M472.5 97.0V105.5M473.5 100.4V102.1M474.5 100.3V102.2M475.5 98.4V104.2M476.5 81.3V122.9M477.5 80.6V122.6M478.5 82.0V121.5M479.5 97.6V105.0M480.5 78.2V123.3M481.5 81.0V119.7M482.5 82.0V118.9M483.5 81.0V120.1M484.5 91.0V112.1M485.5 80.9V120.6M486.5 92.6V109.2M487.5 80.3V120.6M488.5 98.0V104.6M489.5 82.5V119.0M490.5 85.4V117.6M491.5 99.5V103.1M492.5 88.8V112.6M493.5 91.3V112.1M494.5 96.2V106.9M495.5 97.9V104.9M496.5 90.2V111.7M497.5 88.6V113.0M498.5 79.8V123.6M499.5 95.2V107.9M500.5 85.9V118.0M501.5 83.6V120.6M502.5 85.7V116.9M503.5 71.4V131.9M504.5 94.1V108.5M505.5 93.5V108.7M506.5 97.3V104.9M507.5 96.9V105.4M508.5 88.9V113.7M509.5 97.7V104.5M510.5 91.6V110.9M511.5 92.7V109.5M512.5 92.0V110.0M513.5 92.6V110.5M514.5 93.0V109.8M515.5 93.2V109.2M516.5 97.5V105.2M517.5 95.0V107.4M518.5 96.3V106.1M519.5 88.7V113.4M520.5 70.3V133.0M521.5 67.1V136.3M522.5 79.7V124.6M523.5 90.1V113.4M524.5 97.4V105.5M525.5 95.6V107.0M526.5 81.4V121.9M527.5 90.7V112.2M528.5 90.2V113.0M529.5 86.7V115.4M530.5 87.5V115.0M531.5 98.6V103.8M532.5 78.7V123.3M533.5 83.1V118.2M534.5 86.4V115.3M535.5 97.0V106.0M536.5 93.5V108.4M537.5 92.8V109.4M538.5 88.5V114.0M539.5 97.6V104.8M540.5 92.6V110.1M541.5 98.7V103.7M542.5 78.5V124.3M543.5 78.2V125.5M544.5 88.2V113.4M545.5 84.0V118.1M546.5 78.9V122.1M547.5 80.3V124.1M548.5 83.5V119.9M549.5 88.8V113.5M550.5 94.9V107.2M551.5 86.9V114.7M552.5 80.0V122.2M553.5 99.2V103.5M554.5 85.9V116.4M555.5 92.1V111.2M556.5 95.5V107.4M557.5 93.2V109.5M558.5 91.3V112.1M559.5 89.3V112.2M560.5 97.1V105.2M561.5 97.6V105.3M562.5 94.1V109.1M563.5 96.1V106.9M564.5 97.0V105.5M565.5 79.8V124.7M566.5 83.6V118.3M567.5 94.4V108.3M568.5 95.1V107.9M569.5 90.9V112.7M570.5 78.2V125.0M571.5 96.7V106.2M572.5 96.3V106.3M573.5 84.3V119.1M574.5 94.3V108.5M575.5 97.2V105.6M576.5 94.8V107.2M577.5 79.0V122.6M578.5 95.2V106.9M579.5 91.5V111.0M580.5 99.0V103.6M581.5 95.9V107.2M582.5 91.7V111.5M583.5 97.5V105.1M584.5 94.5V107.9M585.5 90.5V112.1M586.5 85.1V119.1M587.5 70.0V134.1M588.5 81.8V120.5M589.5 92.5V109.3M590.5 88.4V114.7M591.5 82.2V120.5M592.5 92.4V110.4M593.5 93.4V109.4M594.5 95.4V107.8M595.5 86.5V117.6M596.5 85.1V116.7M597.5 81.9V119.2M598.5 87.8V115.7M599.5 89.1V114.3M600.5 97.9V104.5M601.5 99.3V103.5M602.5 93.9V108.0M603.5 95.6V106.7M604.5 99.0V103.5M605.5 96.7V106.2M606.5 98.2V104.7M607.5 97.9V104.6M608.5 91.1V112.3M609.5 76.1V125.8M610.5 71.7V129.8M611.5 77.7V123.0M612.5 93.3V108.7M613.5 72.1V132.7M614.5 96.5V106.4M615.5 93.1V108.8M616.5 89.6V113.6M617.5 98.5V104.3M618.5 97.4V105.6M619.5 93.4V109.9M620.5 83.3V120.5M621.5 86.1V117.8M622.5 89.7V112.6M623.5 85.7V116.3M624.5 91.6V111.5M625.5 88.1V114.0M626.5 93.7V109.4M627.5 100.0V102.6M628.5 92.3V109.6M629.5 99.9V102.6M630.5 88.7V114.1M631.5 89.8V111.8M632.5 75.0V126.4M633.5 87.0V116.6M634.5 90.1V113.2M635.5 98.5V104.0M636.5 94.4V108.8M637.5 87.1V115.0M638.5 80.6V123.5M639.5 78.6V125.7M640.5 84.0V117.7M641.5 85.5V117.0M642.5 75.4V129.3M643.5 96.6V105.9M644.5 98.1V104.3M645.5 93.5V109.1M646.5 86.4V116.1M647.5 99.6V102.9M648.5 100.2V102.3M649.5 94.2V108.2M650.5 93.1V110.3M651.5 95.6V107.2M652.5 98.2V104.5M653.5 85.0V119.2M654.5 75.7V125.2M655.5 85.7V117.3M656.5 86.8V117.1M657.5 90.3V113.2M658.5 81.7V120.9M659.5 96.4V106.0M660.5 88.3V113.7M661.5 93.8V108.1M662.5 98.2V104.3M663.5 97.2V105.3M664.5 83.1V119.5M665.5 83.8V118.9M666.5 92.9V109.9M667.5 85.6V118.4M668.5 85.0V118.4M669.5 94.8V108.0M670.5 93.1V109.6M671.5 95.9V106.6M672.5 94.7V107.9M673.5 94.0V109.0M674.5 98.5V104.2M675.5 86.9V115.9M676.5 77.6V124.5M677.5 85.3V118.1M678.5 79.1V124.7M679.5 97.6V105.2M680.5 84.7V116.9M681.5 92.3V110.4M682.5 91.1V110.9M683.5 97.0V106.0M684.5 80.9V121.1M685.5 75.8V128.8M686.5 97.7V105.0M687.5 86.5V115.2M688.5 89.5V113.7M689.5 86.1V117.2M690.5 95.8V106.6M691.5 87.2V114.2M692.5 89.4V113.6M693.5 100.1V102.4M694.5 92.7V109.8M695.5 95.2V106.9M696.5 100.0V102.7M697.5 86.2V115.0M698.5 85.7V117.6M699.5 74.4V129.0M700.5 97.1V105.4M701.5 78.0V124.1M702.5 92.7V110.2M703.5 76.6V127.8M704.5 95.5V106.6M705.5 74.4V128.6M706.5 94.9V108.0M707.5 96.4V106.1M708.5 87.2V114.9M709.5 94.4V107.7M710.5 78.6V122.4M711.5 96.1V106.2M712.5 88.4V113.0M713.5 91.3V111.1M714.5 92.2V110.8M715.5 93.0V109.4M716.5 90.0V112.6M717.5 95.5V107.0M718.5 85.4V118.3M719.5 96.4V106.1M720.5 78.2V126.1M721.5 85.9V115.6M722.5 76.5V126.3M723.5 85.1V117.6M724.5 99.1V103.3M725.5 78.5V122.8M726.5 86.5V117.5M727.5 99.0V103.5M728.5 92.8V109.7M729.5 84.7V118.0M730.5 92.3V109.5M731.5 81.1V121.8M732.5 82.4V120.2M733.5 93.7V109.2M734.5 90.1V113.2M735.5 94.4V108.9M736.5 95.3V107.4M737.5 93.9V108.7M738.5 90.0V112.7M739.5 99.6V103.2M740.5 99.3V103.2M741.5 83.7V117.5M742.5 87.8V114.9M743.5 77.0V125.6M744.5 93.1V109.9M745.5 94.9V107.6M746.5 87.2V115.5" stroke="#f4f4f4" stroke-opacity="0.15" stroke-width="1"/><path d="M127.5 97.1V105.5M128.5 94.3V108.5M129.5 96.5V106.0M130.5 90.3V111.9M131.5 96.1V106.3M132.5 90.0V113.0M133.5 92.7V110.1M134.5 89.2V114.3M135.5 95.5V107.1M136.5 88.0V115.2M137.5 97.0V105.5M139.5 92.2V110.4M140.5 95.2V107.6M141.5 86.7V116.8M142.5 89.1V113.1M143.5 93.3V109.5M144.5 88.6V113.6M145.5 90.9V112.1M147.5 91.2V111.5M149.5 84.8V119.1M153.5 83.2V118.5M154.5 96.5V106.3M155.5 95.9V107.1M156.5 93.3V109.0M158.5 73.8V126.6M159.5 75.7V126.4M160.5 97.6V105.3M162.5 78.6V122.9M163.5 92.4V109.3M165.5 82.0V121.5M166.5 79.4V122.3M167.5 97.0V106.0M168.5 88.2V113.3M169.5 65.7V138.9M170.5 76.2V124.1M171.5 95.9V106.2M172.5 84.2V118.5M174.5 88.5V114.6M175.5 87.0V116.1M176.5 84.8V116.8M177.5 95.0V107.8M178.5 94.6V107.4M179.5 97.3V105.2M180.5 97.4V105.6M181.5 100.4V102.2M182.5 94.7V108.3M184.5 98.4V104.1M185.5 94.7V108.0M186.5 98.3V104.3M187.5 97.7V105.1M188.5 86.1V115.1M190.5 82.1V122.2M192.5 96.1V106.3M193.5 89.8V112.7M194.5 97.9V104.6M195.5 92.9V110.2M196.5 80.6V122.5M197.5 87.9V113.9M198.5 90.2V111.7M199.5 89.6V113.7M200.5 78.0V122.4M201.5 81.7V119.1M202.5 94.9V107.7M203.5 97.0V105.3M204.5 87.7V114.2M206.5 88.2V113.7M207.5 96.3V106.2M208.5 100.0V102.5M209.5 96.3V106.0M210.5 92.1V110.7M211.5 91.9V111.6M212.5 98.0V104.7M213.5 83.8V117.4M214.5 94.7V108.1M216.5 90.3V111.3M217.5 84.5V116.6M218.5 91.8V111.5M219.5 91.0V110.8M222.5 90.0V113.6M223.5 95.1V108.1M224.5 96.7V105.6M225.5 88.3V115.3M226.5 95.8V106.9M227.5 96.5V105.9M228.5 91.3V111.5M229.5 86.6V114.7M231.5 92.8V110.3M232.5 93.6V108.8M233.5 89.3V113.9M234.5 76.0V128.7M235.5 75.9V127.7M236.5 83.4V120.0M238.5 80.8V121.3M240.5 93.8V108.5M241.5 86.9V114.6M243.5 83.2V121.0M244.5 88.3V113.9M245.5 87.4V115.6M246.5 92.5V109.7M247.5 90.6V111.2M248.5 93.0V109.0M250.5 94.5V108.7M251.5 96.5V106.2M252.5 96.6V106.0M253.5 100.4V102.1M255.5 83.7V119.3M256.5 89.8V113.2M257.5 95.4V107.7M258.5 85.9V115.6M259.5 77.0V123.9M260.5 98.8V103.5M261.5 93.9V108.5M262.5 77.1V126.9M263.5 85.8V116.8M264.5 89.0V114.7M265.5 89.0V112.7M266.5 90.2V112.4M267.5 97.0V106.1M268.5 88.5V114.4M269.5 92.5V109.4M270.5 89.3V114.3M271.5 90.0V112.0M272.5 94.7V108.2M275.5 93.0V109.0M276.5 79.7V123.8M278.5 85.8V117.4M279.5 81.3V120.4M280.5 70.8V132.3M281.5 84.6V119.4M282.5 93.4V109.9M283.5 87.5V113.8M284.5 86.6V116.4M285.5 90.2V113.4M286.5 90.0V111.9M287.5 83.6V120.2M288.5 94.6V107.3M289.5 99.8V102.8M290.5 87.1V115.2M291.5 99.9V102.7M292.5 88.4V113.0M293.5 97.3V105.1M294.5 100.2V102.5M296.5 93.5V108.6M297.5 94.7V107.5M300.5 82.2V119.8M301.5 87.7V115.0M303.5 87.9V115.2M304.5 89.6V112.8M306.5 82.0V121.4M307.5 94.4V108.1M308.5 81.5V122.6M310.5 81.1V123.2M311.5 89.1V112.9M312.5 88.5V113.4M313.5 84.2V117.8M314.5 93.9V108.6M315.5 98.6V104.1M316.5 94.3V108.7M317.5 87.1V115.1M318.5 97.7V104.8M319.5 95.1V107.9M320.5 96.0V106.5M321.5 78.4V122.3M322.5 85.6V115.9M323.5 79.7V123.5M324.5 98.3V104.1M325.5 74.7V125.8M326.5 79.9V123.5M327.5 93.1V109.4M328.5 84.0V120.2M330.5 91.3V110.3M331.5 92.3V109.8M332.5 95.8V106.9M333.5 91.2V110.6M334.5 85.0V118.4M336.5 87.1V116.3M337.5 91.7V111.2M338.5 98.5V103.9M339.5 94.8V108.4M340.5 97.7V105.2M341.5 100.1V102.6M342.5 99.2V103.5M343.5 89.8V112.2M344.5 81.0V120.1M345.5 87.7V114.1M347.5 91.0V111.7M348.5 87.9V113.8M349.5 82.8V118.3M351.5 93.2V108.7M352.5 82.0V122.5M353.5 79.4V124.5M354.5 82.7V119.5M355.5 78.5V125.9M356.5 86.5V115.0M357.5 90.0V112.7M359.5 91.5V110.6M360.5 86.7V115.9M361.5 92.8V109.3M362.5 91.9V111.0M363.5 96.9V105.9M364.5 92.7V110.7M365.5 71.2V131.5M366.5 86.2V116.0M367.5 76.1V127.6M368.5 97.7V105.0M369.5 92.5V110.6M370.5 86.5V115.8M372.5 85.6V117.5M374.5 98.1V104.5M375.5 93.4V109.2M377.5 84.9V118.7M378.5 87.1V114.8M379.5 87.4V116.2M380.5 97.6V104.6M382.5 97.6V104.6M384.5 87.9V115.0M385.5 89.5V113.1M386.5 91.7V111.5M387.5 95.6V107.5M388.5 94.8V108.0M389.5 93.3V109.7M391.5 88.8V114.9M392.5 92.9V108.9M393.5 91.3V110.6M394.5 99.0V103.7M395.5 80.6V119.9M396.5 93.9V109.0M397.5 77.9V124.8M398.5 75.5V128.9M400.5 88.5V113.9M401.5 86.5V115.4M402.5 87.3V114.2M403.5 94.7V107.3M404.5 90.1V112.2M405.5 99.5V103.1M406.5 99.3V103.5M407.5 91.2V112.1M408.5 93.3V109.0M409.5 91.3V111.2M412.5 91.0V110.9M413.5 88.5V113.3M414.5 71.4V133.7M415.5 87.5V113.8M416.5 81.0V120.5M418.5 93.1V110.2M420.5 78.5V125.1M421.5 98.5V104.1M422.5 94.1V107.9M423.5 93.2V108.9M424.5 99.3V103.5M426.5 99.5V103.0M427.5 94.6V107.6M429.5 94.9V107.7M430.5 97.3V105.6M431.5 85.7V117.8M432.5 74.0V128.2M433.5 67.1V133.3M434.5 93.3V108.9M435.5 72.1V129.3M436.5 99.1V103.4M437.5 92.6V109.9M438.5 82.2V120.6M440.5 76.8V126.5M441.5 92.6V109.4M442.5 79.5V122.5M443.5 87.5V114.0M444.5 81.1V122.1M445.5 86.9V115.4M446.5 98.8V103.8M447.5 89.5V113.7M448.5 99.3V103.3M449.5 98.6V103.8M450.5 93.5V108.7M454.5 89.6V113.2M455.5 89.9V112.4M456.5 86.5V117.5M457.5 75.3V128.8M458.5 79.5V124.0M459.5 98.4V104.3M460.5 79.6V122.9M461.5 94.7V107.6M462.5 99.1V103.6M463.5 79.3V122.6M464.5 94.8V107.8M465.5 95.9V106.8M466.5 95.1V108.1M467.5 83.5V118.1M468.5 99.7V103.0M470.5 90.0V111.6M471.5 88.6V114.2M473.5 99.3V103.4M474.5 93.7V109.2M475.5 83.7V119.5M476.5 80.8V121.9M477.5 83.7V117.9M478.5 80.5V121.1M479.5 97.3V105.5M480.5 90.1V113.0M481.5 81.0V120.5M482.5 94.2V107.8M484.5 90.9V111.0M485.5 94.6V107.6M486.5 96.7V105.8M487.5 96.0V106.6M488.5 88.1V113.7M490.5 98.1V104.4M491.5 87.4V115.3M492.5 92.7V110.3M493.5 94.0V108.8M494.5 89.2V112.2M495.5 100.1V102.5M496.5 94.6V107.5M497.5 100.0V102.5M499.5 76.2V124.8M500.5 81.5V120.5M502.5 86.2V117.9M503.5 78.8V123.7M504.5 98.5V104.2M505.5 83.1V120.5M506.5 94.6V108.3M510.5 95.1V108.0M513.5 94.5V108.0M514.5 90.8V111.2M515.5 95.8V106.6M516.5 96.1V106.8M517.5 100.2V102.4M518.5 100.2V102.4M519.5 86.8V116.1M520.5 90.2V112.3M521.5 88.5V114.7M522.5 68.9V132.6M523.5 98.4V104.3M524.5 94.0V108.1M525.5 90.3V113.0M526.5 83.6V117.4M529.5 91.8V111.4M530.5 89.9V113.6M532.5 93.4V109.6M533.5 85.4V115.9M534.5 89.8V112.8M535.5 91.0V112.2M536.5 98.0V104.7M537.5 88.9V113.1M538.5 99.2V103.2M539.5 98.5V104.0M540.5 95.6V106.7M541.5 93.1V110.2M542.5 98.2V104.6M543.5 69.3V131.0M544.5 66.3V139.6M545.5 86.7V116.2M547.5 74.3V128.6M548.5 94.7V107.4M549.5 93.2V109.0M550.5 90.8V112.3M551.5 98.1V104.7M552.5 83.1V119.7M553.5 91.4V111.5M556.5 88.7V112.9M557.5 87.1V116.2M558.5 89.3V114.4M559.5 93.8V108.2M561.5 97.9V105.0M562.5 98.3V104.2M563.5 95.2V106.9M564.5 96.5V106.5M565.5 81.8V120.7M566.5 74.2V127.0M567.5 82.6V119.1M568.5 96.9V106.0M569.5 98.9V103.8M571.5 91.8V110.9M573.5 94.8V107.4M574.5 80.3V122.1M575.5 97.3V105.5M577.5 98.2V104.2M578.5 84.5V119.8M579.5 96.7V106.1M580.5 89.8V111.7M581.5 93.6V108.3M582.5 89.5V113.3M583.5 93.6V108.7M584.5 94.1V108.7M585.5 91.5V110.5M586.5 92.1V110.9M587.5 81.0V121.1M588.5 86.5V117.5M589.5 84.0V117.4M590.5 79.3V121.9M591.5 74.1V126.3M592.5 88.8V112.7M594.5 75.5V128.5M595.5 95.1V107.6M596.5 80.0V123.1M597.5 95.0V107.0M598.5 89.9V113.2M599.5 89.1V112.4M600.5 89.5V113.2M601.5 99.0V103.6M603.5 98.5V104.0M606.5 95.3V107.2M607.5 99.1V103.7M608.5 83.4V117.9M609.5 73.2V127.1M610.5 72.8V131.9M611.5 68.3V133.8M612.5 86.8V115.9M613.5 86.8V116.9M614.5 74.1V126.6M615.5 87.3V114.6M616.5 79.1V121.8M618.5 86.4V116.0M619.5 75.3V129.8M621.5 96.5V106.0M622.5 97.7V105.0M624.5 88.1V113.5M626.5 93.3V109.5M628.5 91.9V110.5M629.5 96.9V105.3M630.5 91.8V111.7M632.5 82.3V119.1M633.5 87.9V114.2M634.5 78.5V122.8M635.5 78.7V123.3M636.5 89.4V113.0M637.5 86.1V115.1M639.5 95.6V107.0M640.5 81.1V120.8M641.5 89.6V113.4M642.5 96.3V106.7M643.5 81.2V121.3M645.5 93.2V109.3M646.5 89.2V113.7M647.5 96.0V106.7M648.5 99.7V102.8M649.5 90.9V111.7M652.5 90.0V111.6M653.5 98.5V104.1M655.5 90.9V111.9M656.5 95.1V107.9M659.5 80.9V119.8M660.5 94.6V108.1M661.5 93.4V109.6M663.5 95.5V107.2M664.5 89.6V114.0M666.5 88.7V114.4M667.5 92.4V111.1M668.5 89.5V113.6M669.5 90.3V112.2M670.5 94.1V109.2M671.5 87.1V116.1M672.5 93.6V108.3M673.5 96.0V106.3M674.5 89.5V114.0M675.5 93.0V110.4M676.5 75.2V126.5M677.5 77.1V127.0M678.5 78.6V124.9M679.5 92.0V110.5M680.5 72.7V132.7M681.5 91.8V111.6M682.5 88.3V115.3M684.5 75.9V128.1M685.5 98.3V104.4M686.5 93.3V109.3M687.5 80.0V120.9M688.5 95.2V107.7M689.5 94.3V108.6M690.5 87.4V116.1M691.5 90.6V112.5M693.5 90.6V112.5M694.5 94.5V108.1M695.5 95.4V107.2M696.5 98.5V103.9M697.5 71.1V131.4M698.5 78.6V122.4M699.5 73.3V129.4M700.5 79.5V121.2M701.5 85.9V117.0M702.5 86.9V116.7M704.5 80.6V120.2M705.5 88.3V113.5M708.5 93.6V109.5M709.5 93.9V108.4M710.5 91.7V110.0M711.5 93.7V109.2M712.5 87.6V115.1M713.5 96.5V106.6M714.5 95.9V106.5M715.5 98.1V104.5M716.5 97.2V105.4M717.5 95.2V107.7M718.5 82.9V119.8M719.5 71.9V132.8M720.5 80.2V122.9M721.5 68.3V134.1M722.5 77.3V124.6M723.5 84.9V117.4M724.5 93.4V109.5M725.5 91.4V111.3M726.5 99.1V103.7M727.5 79.0V123.2M729.5 85.8V116.8M730.5 85.9V116.1M731.5 84.2V117.3M732.5 95.8V106.5M734.5 98.9V103.8M735.5 92.0V111.5M736.5 87.6V116.2M737.5 93.1V109.3M738.5 97.3V105.3M739.5 94.9V108.2M740.5 93.0V110.2M741.5 94.4V108.2M742.5 81.9V119.1M743.5 75.4V126.1M744.5 74.4V127.6M746.5 95.5V107.6" stroke="#f4f4f4" stroke-opacity="0.15" stroke-width="1"/><path d="M127.5 78.1V123.2M129.5 87.5V115.3M130.5 86.9V115.5M131.5 80.1V122.2M132.5 98.4V104.3M133.5 90.0V112.0M134.5 84.1V119.8M135.5 88.9V113.1M136.5 91.6V111.7M137.5 98.9V103.4M139.5 98.5V103.9M140.5 98.5V104.3M141.5 87.3V116.0M142.5 85.3V115.9M143.5 88.8V112.8M144.5 88.4V115.4M145.5 88.1V114.8M149.5 77.4V125.8M153.5 82.8V121.2M154.5 74.5V130.3M158.5 92.2V109.6M159.5 85.9V116.7M160.5 84.4V119.3M162.5 95.6V107.5M163.5 94.4V107.5M165.5 96.8V106.2M166.5 91.8V110.4M167.5 90.3V111.6M168.5 83.1V117.8M170.5 69.6V135.5M171.5 78.4V126.3M175.5 87.6V114.0M176.5 83.4V120.8M178.5 100.3V102.3M179.5 97.2V105.3M181.5 96.4V105.8M182.5 96.4V106.6M184.5 95.7V107.4M185.5 97.4V105.1M187.5 95.3V107.3M188.5 99.5V103.2M190.5 81.1V122.1M194.5 79.3V121.3M195.5 76.7V126.0M197.5 71.6V128.9M198.5 73.9V130.0M199.5 91.4V111.8M201.5 95.2V106.9M202.5 80.4V124.1M204.5 98.9V103.5M206.5 92.9V110.1M208.5 90.9V111.1M209.5 93.2V110.1M210.5 98.0V104.3M211.5 91.8V110.9M213.5 88.8V113.4M218.5 86.1V117.0M219.5 97.4V105.2M222.5 81.7V119.6M224.5 83.5V119.7M225.5 95.6V107.0M227.5 90.2V112.2M228.5 97.0V105.7M229.5 88.6V115.0M232.5 94.8V108.3M234.5 66.5V134.6M236.5 78.9V122.9M238.5 73.8V130.5M240.5 88.1V113.2M241.5 88.0V113.4M243.5 95.0V107.2M244.5 92.5V110.0M245.5 94.1V108.2M246.5 88.8V114.6M247.5 87.5V114.0M250.5 97.1V105.6M251.5 99.2V103.2M252.5 100.8V101.9M253.5 100.0V102.7M256.5 91.4V110.8M257.5 97.7V105.2M258.5 78.9V123.0M259.5 91.7V110.6M260.5 75.4V128.1M262.5 78.5V122.7M263.5 77.3V126.3M264.5 97.4V105.3M265.5 96.9V105.8M266.5 93.2V109.4M267.5 97.8V105.2M268.5 88.2V114.9M269.5 83.6V117.3M270.5 99.0V103.6M271.5 97.6V104.6M272.5 89.9V111.8M275.5 91.7V110.7M276.5 82.7V119.3M278.5 89.6V112.5M279.5 72.8V131.6M281.5 76.9V125.9M282.5 87.4V116.2M283.5 98.6V104.2M284.5 96.6V106.3M285.5 80.9V119.9M286.5 83.4V118.8M288.5 96.6V106.2M289.5 97.0V105.2M290.5 99.8V102.7M292.5 89.4V113.6M293.5 97.6V104.9M296.5 99.7V102.8M297.5 97.7V104.6M300.5 80.7V123.8M301.5 99.0V103.8M303.5 97.2V105.7M306.5 81.9V120.9M307.5 86.5V115.7M308.5 98.9V103.8M310.5 82.2V118.8M312.5 87.4V115.1M313.5 94.5V107.8M314.5 88.4V113.2M315.5 86.3V117.7M316.5 87.9V115.0M317.5 96.2V106.4M318.5 88.9V112.5M319.5 91.6V110.9M320.5 93.9V108.8M321.5 89.0V113.3M322.5 89.7V113.0M324.5 69.8V133.3M326.5 82.0V119.3M327.5 78.3V122.2M330.5 80.4V121.8M331.5 95.6V106.7M332.5 84.1V118.7M333.5 86.5V115.4M336.5 89.3V112.5M337.5 95.8V106.7M338.5 97.0V105.5M339.5 99.4V103.3M341.5 97.7V105.2M342.5 94.5V108.2M344.5 82.3V121.0M347.5 97.7V104.8M348.5 85.1V115.9M349.5 80.4V120.2M351.5 96.7V106.2M352.5 85.1V118.0M353.5 89.4V112.7M354.5 99.3V103.4M355.5 80.8V123.7M356.5 82.3V120.4M359.5 91.2V110.6M360.5 93.7V109.2M361.5 96.5V106.3M362.5 91.2V110.6M363.5 100.2V102.5M364.5 100.4V102.2M365.5 88.5V114.2M367.5 93.3V109.1M368.5 74.8V129.7M369.5 95.2V106.9M370.5 92.7V109.4M374.5 80.2V121.4M375.5 97.3V105.1M378.5 89.9V111.6M379.5 97.0V106.0M380.5 91.7V111.2M382.5 88.4V113.5M384.5 97.3V105.1M386.5 97.1V105.4M387.5 81.8V122.0M389.5 82.0V118.9M391.5 92.0V110.1M392.5 90.3V111.8M393.5 79.4V121.0M395.5 85.1V118.7M396.5 82.0V118.9M397.5 87.3V115.4M400.5 97.7V104.8M401.5 90.6V111.0M402.5 90.3V113.1M403.5 89.3V114.4M404.5 93.2V109.4M405.5 98.6V104.2M406.5 93.6V108.3M407.5 98.7V103.8M408.5 97.8V104.7M409.5 88.8V114.0M412.5 67.6V132.5M413.5 70.2V130.2M414.5 94.5V107.6M415.5 87.8V115.2M416.5 81.0V121.7M421.5 97.0V105.7M422.5 94.6V107.6M423.5 92.5V109.5M424.5 89.6V112.3M426.5 92.9V109.1M427.5 97.5V104.8M429.5 95.2V107.4M430.5 100.0V102.7M431.5 91.9V110.4M432.5 80.3V122.1M433.5 70.4V131.6M435.5 90.1V113.4M436.5 73.7V128.6M437.5 85.8V116.2M438.5 88.1V115.2M440.5 93.8V109.2M441.5 85.4V118.3M443.5 92.2V110.2M444.5 82.4V119.5M445.5 85.2V118.6M446.5 87.6V115.5M447.5 98.3V104.2M448.5 93.4V109.7M449.5 89.8V112.2M450.5 99.6V103.0M454.5 92.8V110.3M455.5 67.5V133.5M456.5 95.8V106.8M457.5 76.3V127.6M458.5 97.4V105.0M459.5 79.1V122.8M460.5 78.9V122.0M461.5 79.7V122.9M463.5 86.3V116.2M464.5 85.9V117.1M465.5 81.2V123.4M466.5 95.3V107.2M468.5 98.3V104.6M470.5 99.5V103.1M471.5 99.3V103.3M473.5 94.3V108.3M474.5 99.2V103.5M475.5 84.5V119.0M476.5 96.9V106.0M477.5 81.1V123.1M478.5 92.8V109.0M479.5 86.0V115.3M480.5 95.3V107.9M481.5 80.4V123.4M484.5 84.2V119.6M486.5 89.9V112.2M487.5 94.5V107.7M488.5 85.2V119.0M490.5 85.7V115.5M491.5 95.9V106.7M492.5 92.8V110.4M493.5 99.9V102.9M495.5 96.6V106.0M496.5 89.3V114.0M497.5 96.6V106.5M499.5 71.6V129.6M500.5 69.6V135.9M503.5 84.7V117.3M504.5 94.5V108.0M505.5 89.1V114.4M506.5 99.0V103.5M513.5 100.1V102.6M514.5 97.1V105.6M515.5 93.5V108.8M516.5 99.7V102.8M517.5 100.0V102.8M518.5 95.2V107.4M519.5 93.4V108.8M520.5 77.4V126.3M521.5 71.2V132.5M522.5 72.1V132.3M523.5 75.8V128.2M525.5 90.1V113.3M526.5 78.4V124.5M529.5 83.1V119.0M530.5 84.1V117.5M534.5 87.6V114.1M535.5 85.8V116.4M536.5 91.0V111.1M537.5 97.8V105.1M538.5 90.3V112.7M539.5 93.4V108.9M541.5 96.2V106.2M542.5 87.4V115.2M543.5 87.4V116.2M544.5 76.5V127.6M545.5 74.4V126.9M547.5 75.0V125.5M548.5 91.7V110.1M550.5 97.9V104.8M551.5 86.8V115.8M552.5 81.7V120.6M553.5 85.8V117.8M556.5 91.4V111.7M557.5 92.7V110.5M559.5 88.8V114.8M562.5 95.7V106.7M564.5 87.2V114.8M565.5 76.0V125.1M566.5 74.1V126.1M567.5 75.0V125.5M569.5 84.0V118.4M573.5 80.7V119.9M574.5 87.9V115.8M575.5 87.9V115.2M577.5 85.9V117.5M578.5 92.2V110.0M579.5 91.6V111.5M580.5 97.1V105.9M581.5 98.7V104.0M582.5 86.8V115.6M583.5 95.1V107.5M584.5 89.1V113.6M585.5 94.9V107.5M586.5 95.2V107.2M587.5 88.7V113.8M588.5 91.4V110.6M589.5 71.7V131.0M590.5 98.1V104.6M591.5 85.5V116.3M592.5 77.3V126.7M594.5 81.1V123.3M595.5 87.0V115.2M596.5 81.2V122.8M597.5 76.2V125.0M598.5 98.5V103.9M599.5 96.3V106.0M600.5 90.5V112.7M601.5 91.9V111.0M603.5 93.6V109.1M606.5 95.8V107.2M607.5 98.1V104.5M608.5 86.4V116.0M610.5 89.0V114.4M612.5 94.5V107.7M613.5 81.3V119.7M614.5 91.3V110.8M616.5 81.7V120.7M618.5 88.3V115.0M619.5 85.7V115.7M622.5 95.0V108.0M624.5 93.9V108.7M626.5 97.2V105.8M628.5 95.0V108.0M629.5 98.8V103.6M632.5 84.3V117.6M633.5 89.4V114.1M635.5 79.1V125.4M636.5 89.8V113.2M639.5 95.8V106.4M640.5 81.1V120.7M643.5 92.5V109.5M645.5 91.5V111.9M646.5 97.7V105.2M647.5 95.0V107.0M648.5 90.9V112.1M649.5 95.2V106.9M653.5 85.3V118.0M655.5 74.8V129.3M656.5 89.2V113.5M659.5 80.7V120.9M660.5 96.9V106.0M661.5 81.9V121.4M663.5 90.7V111.6M664.5 75.4V126.9M666.5 98.0V104.5M667.5 97.8V105.1M670.5 94.5V107.9M671.5 99.7V102.9M673.5 96.4V106.1M676.5 97.8V104.9M678.5 77.2V126.1M679.5 98.7V103.8M680.5 87.4V113.9M681.5 73.7V127.7M682.5 98.6V104.2M684.5 85.0V117.6M685.5 93.2V109.5M686.5 87.1V114.2M687.5 84.2V119.7M688.5 99.1V103.5M689.5 92.6V110.4M690.5 97.1V105.2M693.5 98.4V104.0M695.5 97.0V105.3M696.5 95.4V107.3M698.5 77.1V125.3M699.5 80.4V124.0M700.5 91.4V111.3M701.5 88.3V113.6M702.5 75.3V129.4M704.5 78.6V124.8M708.5 84.8V116.6M710.5 81.9V121.2M711.5 90.0V111.5M712.5 89.1V113.7M713.5 88.9V113.4M717.5 91.9V110.7M718.5 97.1V105.9M720.5 93.7V108.7M721.5 69.0V132.6M722.5 81.4V121.6M723.5 84.4V116.8M724.5 79.9V124.5M725.5 79.9V124.6M727.5 85.4V115.7M729.5 78.0V126.8M731.5 88.4V115.1M732.5 84.0V120.3M736.5 88.4V113.6M737.5 93.8V108.4M738.5 89.4V113.8M739.5 99.9V102.8M740.5 92.4V109.7M741.5 77.1V124.7M742.5 84.9V117.7M743.5 96.7V106.0M744.5 75.9V126.4M746.5 79.6V121.4" stroke="#f4f4f4" stroke-opacity="0.15" stroke-width="1"/><path d="M129.5 87.1V116.1M130.5 93.1V110.0M131.5 79.5V121.3M132.5 86.5V117.6M134.5 94.4V108.1M135.5 99.7V102.9M136.5 82.7V120.6M137.5 97.2V105.1M139.5 94.3V108.0M140.5 91.6V111.7M141.5 96.5V106.1M144.5 94.3V108.1M145.5 90.7V112.8M149.5 77.4V123.5M153.5 70.4V134.8M154.5 93.9V109.0M163.5 84.5V118.3M165.5 80.0V124.0M166.5 85.5V116.0M170.5 76.8V127.0M171.5 86.7V115.8M175.5 90.3V112.3M176.5 99.6V103.0M182.5 94.3V108.3M184.5 99.0V103.7M185.5 95.1V107.4M187.5 96.8V106.0M188.5 85.7V116.8M190.5 80.0V122.4M194.5 93.0V110.3M195.5 92.7V110.8M197.5 97.5V104.8M198.5 98.2V104.5M201.5 86.1V116.1M202.5 91.8V110.3M204.5 90.9V111.3M206.5 89.9V113.3M208.5 95.6V106.9M209.5 99.5V103.1M210.5 89.6V113.0M211.5 90.7V111.7M213.5 90.9V110.9M218.5 94.4V107.9M219.5 98.1V104.5M222.5 84.2V119.9M224.5 84.2V117.2M225.5 85.5V117.9M227.5 94.3V107.7M228.5 92.9V109.1M229.5 91.8V111.0M234.5 68.0V137.3M236.5 91.2V111.7M238.5 71.6V128.4M240.5 92.5V109.8M241.5 85.7V117.6M244.5 83.5V117.6M245.5 97.3V105.5M246.5 90.9V112.2M251.5 99.9V102.7M252.5 98.2V104.5M253.5 96.7V105.7M257.5 94.7V108.1M258.5 78.5V123.1M262.5 82.1V120.6M263.5 93.3V108.8M264.5 83.7V117.2M265.5 90.8V112.4M267.5 91.4V111.3M268.5 88.7V114.3M269.5 84.6V116.8M270.5 99.3V103.2M271.5 99.9V102.7M272.5 89.0V113.1M275.5 93.3V109.5M278.5 94.3V108.8M279.5 77.8V126.7M281.5 87.2V115.7M283.5 79.5V123.0M285.5 87.3V115.0M288.5 90.1V112.4M289.5 85.8V116.0M290.5 86.4V115.7M297.5 94.1V108.5M300.5 98.2V104.3M303.5 83.6V117.4M306.5 79.0V122.8M307.5 88.6V112.9M308.5 94.2V108.7M312.5 90.3V112.6M313.5 85.4V116.3M314.5 96.5V106.6M315.5 96.1V106.7M316.5 94.8V107.7M317.5 89.6V112.8M319.5 94.7V107.3M320.5 90.2V113.4M321.5 96.9V105.5M324.5 75.8V125.3M326.5 91.9V110.3M327.5 97.5V104.9M330.5 91.6V110.6M332.5 90.4V112.8M333.5 82.9V120.1M336.5 89.9V111.8M337.5 91.9V111.0M338.5 99.9V102.6M339.5 94.0V109.2M341.5 95.8V107.1M342.5 99.4V103.1M344.5 95.6V107.2M347.5 72.0V130.5M349.5 89.3V112.5M352.5 96.0V106.3M353.5 83.9V118.8M355.5 78.7V124.4M356.5 87.0V116.6M359.5 92.1V110.6M360.5 92.5V110.9M361.5 94.9V108.2M362.5 96.2V106.6M363.5 96.0V106.9M364.5 99.0V103.6M365.5 89.9V111.9M369.5 72.8V128.9M374.5 94.0V107.9M375.5 98.3V104.1M378.5 80.3V122.6M379.5 89.3V112.6M380.5 86.6V115.6M382.5 85.4V117.2M386.5 94.8V108.4M389.5 86.6V115.2M391.5 78.6V125.7M392.5 92.8V109.7M393.5 87.3V116.5M395.5 89.7V113.1M396.5 82.6V120.6M400.5 78.5V125.0M403.5 93.9V108.8M404.5 88.2V115.1M405.5 100.1V102.4M406.5 94.4V108.6M407.5 94.6V107.4M409.5 91.5V111.7M412.5 93.4V109.8M413.5 67.5V133.1M414.5 84.7V118.8M415.5 92.4V110.3M416.5 97.0V105.6M421.5 96.2V106.5M424.5 89.0V112.6M426.5 97.5V104.8M427.5 98.8V103.6M429.5 98.8V103.9M430.5 95.7V106.6M431.5 78.6V122.8M436.5 77.4V124.1M437.5 92.3V110.0M438.5 77.0V126.7M440.5 98.8V103.8M441.5 80.1V121.9M444.5 96.1V106.7M445.5 97.6V105.0M447.5 87.7V115.7M448.5 91.2V111.6M449.5 98.7V103.8M450.5 91.1V111.0M454.5 93.0V110.1M455.5 95.7V106.5M456.5 93.5V109.0M458.5 98.7V104.1M461.5 80.7V122.8M463.5 81.4V122.8M465.5 84.3V118.2M466.5 84.4V119.3M468.5 88.6V113.2M470.5 96.5V106.0M471.5 92.3V109.6M473.5 95.8V106.7M474.5 93.0V108.9M475.5 86.1V118.0M476.5 92.0V110.8M477.5 82.1V120.3M478.5 82.0V119.5M479.5 97.4V105.3M481.5 84.5V117.3M487.5 87.4V114.1M488.5 77.8V124.2M490.5 87.3V115.3M491.5 89.7V113.3M493.5 96.6V106.0M495.5 92.4V110.6M496.5 96.8V105.8M497.5 89.2V113.3M499.5 89.0V113.2M500.5 64.8V137.6M505.5 81.5V119.7M506.5 92.1V110.8M513.5 97.6V105.2M514.5 97.6V104.7M515.5 97.9V104.6M516.5 97.3V105.3M518.5 100.1V102.5M519.5 93.8V109.3M520.5 94.9V107.3M521.5 77.3V123.1M526.5 88.3V113.9M530.5 91.1V111.2M535.5 84.9V116.8M536.5 96.8V105.9M537.5 86.8V116.5M538.5 98.5V104.1M539.5 98.5V103.9M541.5 96.0V106.4M542.5 81.6V121.7M543.5 74.2V128.9M544.5 82.7V119.0M545.5 87.3V115.0M547.5 74.9V127.4M548.5 95.2V106.8M550.5 82.8V118.0M551.5 82.7V118.7M552.5 76.1V128.8M553.5 91.1V111.6M556.5 96.2V106.6M557.5 93.6V109.7M559.5 99.7V102.9M562.5 99.8V102.7M564.5 91.3V111.5M566.5 98.9V103.7M567.5 92.2V111.1M569.5 81.0V123.2M573.5 81.3V120.7M574.5 85.6V116.0M577.5 94.3V108.2M578.5 84.9V116.8M580.5 88.9V114.5M581.5 87.2V115.8M583.5 92.2V109.9M586.5 99.5V103.1M589.5 94.6V107.6M590.5 79.7V122.0M591.5 86.0V118.1M592.5 91.7V111.4M594.5 77.9V123.8M595.5 77.9V123.3M597.5 99.1V103.7M599.5 83.9V118.7M600.5 91.2V110.9M601.5 93.0V109.0M603.5 99.0V103.5M606.5 97.6V105.1M607.5 97.1V105.1M610.5 94.2V108.4M612.5 73.4V128.6M613.5 87.1V116.5M614.5 78.4V125.5M618.5 78.4V124.1M619.5 81.1V123.2M622.5 94.6V108.0M626.5 98.5V104.1M632.5 79.4V122.3M633.5 79.9V123.1M635.5 87.5V114.2M636.5 80.6V122.6M639.5 80.6V122.2M640.5 93.7V108.7M643.5 97.7V105.2M645.5 89.6V112.2M646.5 97.7V104.6M647.5 89.2V112.2M648.5 89.5V113.9M649.5 99.5V103.2M653.5 74.8V128.4M655.5 74.9V126.4M659.5 81.0V120.3M660.5 81.8V119.8M661.5 84.1V118.7M663.5 90.3V112.0M664.5 84.9V118.9M666.5 96.6V105.9M667.5 89.8V113.7M670.5 94.5V107.7M671.5 93.5V109.3M673.5 98.8V103.6M676.5 82.2V120.9M678.5 81.7V120.7M679.5 78.2V125.6M680.5 90.3V113.2M681.5 78.8V124.7M682.5 91.4V110.3M688.5 89.3V112.5M690.5 96.8V105.6M693.5 91.6V111.4M695.5 96.8V106.1M696.5 99.6V103.0M698.5 83.8V117.2M699.5 77.6V125.8M700.5 82.9V118.4M701.5 98.4V104.4M704.5 87.1V116.6M708.5 73.0V128.3M710.5 95.8V107.3M711.5 86.9V115.5M713.5 99.4V103.4M717.5 100.1V102.6M718.5 88.4V114.3M720.5 70.5V129.1M722.5 84.7V116.7M723.5 74.8V125.7M724.5 89.5V114.0M725.5 98.4V104.2M727.5 87.2V116.6M729.5 93.8V108.7M731.5 89.7V112.0M732.5 97.2V105.0M736.5 89.1V112.3M737.5 99.1V103.7M738.5 92.9V110.3M739.5 92.0V110.3M740.5 100.5V102.2M741.5 92.3V110.3M742.5 97.3V105.1M743.5 76.2V124.7M744.5 83.0V120.9M746.5 83.5V118.6" stroke="#f4f4f4" stroke-opacity="0.15" stroke-width="1"/><path d="M129.5 97.2V105.5M130.5 84.5V117.2M131.5 87.9V115.5M136.5 89.8V112.6M139.5 86.2V115.4M140.5 94.3V108.0M141.5 94.5V107.5M145.5 96.8V105.9M153.5 71.5V129.4M163.5 95.7V106.9M165.5 99.4V103.3M170.5 70.4V130.0M171.5 97.0V105.2M175.5 80.8V120.2M176.5 86.1V118.0M187.5 95.0V107.9M194.5 79.4V121.4M198.5 88.9V113.4M201.5 92.1V111.4M202.5 91.0V111.6M206.5 96.2V106.2M208.5 91.0V111.1M209.5 94.7V107.5M210.5 91.4V111.8M211.5 78.5V126.3M213.5 94.8V107.8M218.5 92.9V109.4M222.5 98.4V104.1M224.5 86.1V115.3M225.5 93.6V108.8M227.5 92.4V110.4M228.5 86.0V115.9M229.5 91.7V110.9M234.5 95.7V106.9M236.5 95.8V107.3M238.5 72.3V132.7M240.5 80.5V121.5M241.5 79.4V123.5M244.5 83.6V117.4M245.5 88.9V114.3M246.5 85.5V117.8M253.5 99.4V103.4M257.5 82.0V121.8M258.5 90.1V112.0M262.5 80.9V121.5M263.5 84.7V118.7M264.5 84.4V118.8M265.5 85.5V118.4M267.5 91.2V111.5M270.5 86.5V116.3M271.5 98.1V104.8M272.5 92.0V110.6M275.5 95.8V106.7M279.5 88.2V113.3M281.5 94.4V107.8M288.5 89.0V113.5M290.5 96.8V105.4M300.5 94.7V108.4M303.5 96.7V105.9M307.5 90.6V112.0M312.5 91.6V110.6M314.5 88.4V113.3M315.5 90.7V112.4M316.5 93.7V109.2M317.5 95.2V107.0M324.5 81.5V121.3M326.5 97.9V104.8M327.5 93.0V109.1M332.5 94.9V107.5M333.5 92.8V109.3M336.5 96.0V106.9M337.5 97.1V105.8M338.5 93.2V108.9M339.5 91.8V110.9M341.5 94.8V108.0M344.5 83.7V118.0M349.5 89.9V113.7M352.5 96.1V106.7M355.5 82.0V118.9M356.5 95.2V107.7M359.5 98.8V103.8M360.5 97.5V105.1M361.5 92.5V110.8M362.5 89.9V113.2M363.5 95.5V106.6M364.5 92.0V111.1M369.5 89.1V114.3M375.5 98.4V103.9M378.5 79.0V121.6M379.5 88.5V114.9M380.5 82.9V118.7M382.5 90.6V111.7M386.5 98.5V104.2M389.5 88.4V113.1M391.5 83.7V118.1M392.5 79.2V124.5M393.5 94.5V108.3M395.5 80.2V121.3M396.5 79.9V123.8M400.5 90.1V112.5M403.5 96.4V105.9M404.5 99.8V102.8M406.5 97.8V104.8M407.5 89.3V112.7M409.5 95.1V108.0M412.5 69.2V133.4M413.5 95.1V107.0M414.5 71.2V133.2M415.5 96.1V106.4M421.5 90.9V111.4M424.5 97.5V105.4M426.5 93.1V109.7M427.5 97.6V105.3M429.5 98.5V103.8M430.5 95.4V106.9M431.5 84.7V118.9M436.5 89.6V112.1M437.5 91.2V111.8M440.5 90.0V111.7M441.5 95.9V106.7M445.5 99.6V103.0M447.5 87.8V114.6M449.5 99.9V102.9M455.5 85.9V118.1M456.5 73.9V129.8M458.5 79.5V123.6M461.5 95.4V107.6M466.5 87.4V115.9M468.5 87.1V114.6M470.5 100.1V102.5M473.5 94.2V108.6M474.5 94.7V107.6M475.5 87.5V114.5M476.5 90.8V111.9M478.5 92.8V110.6M479.5 81.3V121.9M481.5 99.2V103.2M491.5 97.4V105.4M493.5 92.4V111.0M495.5 98.2V104.2M496.5 97.2V105.1M497.5 93.5V109.6M499.5 78.0V125.4M500.5 86.0V118.0M505.5 97.3V105.3M513.5 94.7V108.3M514.5 98.0V104.8M515.5 98.4V104.0M516.5 98.5V104.2M518.5 100.0V102.7M519.5 88.6V113.7M520.5 70.2V130.0M526.5 80.5V123.3M530.5 77.4V126.1M535.5 99.6V103.0M536.5 99.2V103.5M537.5 98.6V103.9M539.5 99.4V103.1M543.5 77.7V124.1M544.5 79.9V120.7M545.5 87.5V116.2M548.5 91.0V112.0M550.5 88.7V114.7M551.5 83.7V118.9M552.5 76.8V126.3M553.5 86.1V117.9M557.5 92.4V109.5M559.5 93.9V109.0M562.5 93.8V108.7M564.5 94.9V108.0M566.5 93.9V108.7M567.5 82.0V120.7M569.5 88.0V114.4M573.5 83.8V120.0M577.5 93.3V108.8M578.5 90.8V112.2M580.5 87.8V113.7M581.5 97.8V105.1M583.5 96.4V106.2M586.5 93.7V108.8M589.5 81.0V123.6M590.5 92.5V110.7M591.5 72.2V127.6M594.5 78.1V125.4M597.5 94.1V108.5M599.5 86.0V117.4M600.5 93.2V110.0M606.5 97.6V105.2M607.5 95.3V107.6M612.5 94.5V107.7M613.5 72.0V131.4M614.5 97.6V105.0M618.5 94.8V107.7M626.5 93.0V109.3M632.5 89.6V113.3M635.5 80.2V121.5M636.5 89.1V113.7M640.5 99.2V103.3M643.5 83.4V119.8M645.5 98.3V104.4M646.5 93.9V108.0M649.5 95.5V107.0M653.5 87.2V115.8M655.5 86.0V116.3M659.5 90.5V112.1M661.5 91.1V110.7M663.5 82.2V121.9M667.5 93.4V110.0M671.5 89.6V112.0M673.5 96.4V106.5M676.5 84.4V118.2M679.5 79.1V123.2M680.5 93.3V108.7M681.5 83.9V117.8M682.5 76.4V125.1M688.5 89.0V114.7M698.5 81.1V120.3M701.5 71.8V129.6M704.5 75.5V127.7M708.5 74.8V128.7M710.5 92.4V109.7M711.5 98.5V103.9M713.5 96.2V106.7M717.5 100.3V102.2M718.5 94.6V107.5M720.5 95.4V106.8M722.5 96.5V106.5M724.5 95.4V107.7M729.5 88.9V113.7M731.5 76.6V125.1M732.5 92.1V110.2M736.5 94.6V108.6M737.5 91.3V111.9M739.5 96.3V106.7M740.5 95.0V107.5M742.5 78.9V125.2M744.5 94.2V108.2M746.5 92.6V109.5" stroke="#f4f4f4" stroke-opacity="0.15" stroke-width="1"/><path d="M130.5 87.2V115.5M131.5 82.5V119.5M145.5 99.3V103.4M170.5 80.4V122.3M176.5 92.3V109.9M187.5 91.8V110.1M194.5 92.0V110.5M198.5 90.1V111.7M201.5 98.5V104.2M206.5 96.6V105.8M209.5 97.1V105.2M210.5 86.2V115.4M211.5 90.5V111.4M213.5 83.5V117.7M218.5 90.9V111.0M225.5 93.7V108.4M229.5 93.2V108.8M234.5 93.0V110.3M238.5 70.0V130.2M240.5 90.8V112.8M241.5 92.4V110.1M244.5 96.0V106.3M245.5 97.1V105.4M253.5 98.9V103.6M258.5 88.9V113.0M264.5 76.5V125.2M267.5 91.4V110.4M270.5 84.8V117.7M271.5 98.6V104.2M272.5 90.3V113.1M279.5 81.8V121.9M288.5 93.7V108.7M290.5 95.0V107.4M300.5 81.1V122.6M303.5 88.4V113.6M312.5 95.6V106.7M315.5 93.9V108.1M324.5 89.4V113.5M332.5 95.4V107.1M336.5 94.4V108.0M337.5 95.8V106.9M341.5 97.5V104.8M344.5 82.6V118.5M349.5 86.0V117.8M352.5 89.8V113.9M359.5 98.9V103.7M362.5 99.9V102.7M363.5 97.8V104.5M364.5 100.1V102.4M369.5 92.3V110.9M375.5 81.8V121.1M378.5 86.8V116.5M379.5 91.1V110.6M380.5 86.9V114.5M382.5 88.1V114.4M386.5 93.5V109.1M389.5 98.7V104.1M391.5 95.7V106.7M396.5 94.0V109.1M400.5 82.7V120.9M403.5 88.0V113.7M406.5 90.6V111.4M413.5 72.0V133.2M414.5 76.5V127.2M421.5 83.5V117.9M424.5 85.2V117.2M426.5 98.7V103.8M427.5 91.8V111.4M429.5 97.4V105.5M430.5 99.5V103.1M431.5 84.9V119.1M437.5 81.4V123.0M441.5 78.1V123.0M447.5 92.7V109.6M456.5 82.1V119.9M458.5 91.9V110.4M470.5 99.9V102.8M474.5 98.1V104.3M475.5 95.8V106.7M476.5 76.8V124.1M481.5 79.3V121.8M491.5 83.9V119.5M493.5 92.7V110.8M495.5 98.5V104.4M497.5 90.0V113.0M505.5 81.1V122.6M513.5 94.1V108.5M515.5 94.8V107.5M516.5 98.7V103.8M519.5 85.7V116.8M520.5 74.5V127.2M526.5 78.4V122.9M535.5 85.3V118.6M537.5 92.0V110.1M545.5 82.0V119.7M548.5 95.0V107.6M550.5 85.4V117.1M552.5 91.6V110.7M553.5 78.5V126.3M559.5 90.4V111.8M562.5 95.1V107.1M566.5 96.1V106.8M567.5 90.5V112.5M577.5 92.6V110.0M578.5 90.1V111.7M580.5 87.6V114.3M581.5 89.4V112.3M583.5 93.3V109.1M586.5 92.0V110.8M589.5 64.7V141.5M590.5 70.5V130.5M594.5 97.6V105.3M599.5 86.9V116.8M600.5 91.2V111.9M606.5 94.0V109.2M612.5 81.9V119.5M626.5 93.1V108.9M635.5 75.9V125.1M640.5 91.3V110.4M643.5 92.7V109.8M645.5 89.8V113.3M646.5 93.5V109.0M653.5 85.8V117.5M655.5 90.3V112.9M659.5 82.9V121.5M661.5 91.9V110.1M663.5 98.2V104.3M667.5 99.6V103.1M673.5 95.5V107.4M680.5 86.9V115.1M682.5 93.8V108.2M688.5 85.1V117.3M698.5 88.1V115.6M704.5 96.6V106.0M708.5 87.2V116.0M710.5 78.6V125.5M711.5 96.0V107.0M713.5 98.3V104.4M718.5 91.9V110.6M720.5 68.2V133.9M722.5 79.1V124.4M724.5 77.2V126.6M729.5 81.4V121.3M740.5 100.4V102.2M742.5 97.0V105.7M746.5 85.7V115.9" stroke="#f4f4f4" stroke-opacity="0.15" stroke-width="1"/><path d="M170.5 69.6V134.9M201.5 84.3V119.8M209.5 98.6V103.9M213.5 91.2V112.1M218.5 99.8V103.0M234.5 70.8V130.0M241.5 86.7V115.2M244.5 83.3V119.3M258.5 99.2V103.5M270.5 99.7V102.9M279.5 92.6V110.4M290.5 89.7V112.1M300.5 82.0V120.9M336.5 88.1V114.4M363.5 91.1V112.3M364.5 92.6V110.4M378.5 92.7V109.2M379.5 88.0V115.0M386.5 93.7V109.5M403.5 91.3V112.3M424.5 90.8V111.0M427.5 96.3V106.3M429.5 95.8V106.4M437.5 78.2V122.3M447.5 87.4V115.8M458.5 94.6V108.2M475.5 99.6V102.9M476.5 87.0V116.1M481.5 84.8V118.1M493.5 90.8V111.2M505.5 97.8V105.1M513.5 96.2V105.9M516.5 96.6V106.2M519.5 91.1V110.7M526.5 91.1V111.0M535.5 84.4V118.3M545.5 88.4V115.0M548.5 96.5V105.8M553.5 87.4V116.1M559.5 87.7V114.0M562.5 97.8V104.8M580.5 96.6V106.4M581.5 94.4V108.4M583.5 91.2V110.8M586.5 83.9V120.0M589.5 85.1V116.5M594.5 94.8V107.2M606.5 98.9V103.6M612.5 84.9V117.8M626.5 98.5V103.9M640.5 80.8V121.2M643.5 95.6V106.8M653.5 75.4V124.7M655.5 94.7V108.0M659.5 79.4V121.6M663.5 93.6V108.4M667.5 86.9V115.3M688.5 79.3V122.0M710.5 96.8V106.2M711.5 89.8V112.4M713.5 94.8V108.4M718.5 96.7V105.8M720.5 67.8V133.2M729.5 76.3V127.2" stroke="#f4f4f4" stroke-opacity="0.15" stroke-width="1"/><path d="M127.5 87.4V115.2M129.5 92.9V109.7M133.5 85.3V117.3M139.5 85.5V117.1M141.5 93.5V109.1M142.5 91.8V110.8M149.5 80.9V121.7M151.5 82.9V119.7M155.5 78.2V124.4M160.5 80.2V122.4M167.5 87.8V114.8M168.5 81.8V120.8M173.5 79.8V122.8M175.5 88.8V113.8M176.5 85.2V117.4M184.5 96.6V106.0M195.5 75.3V127.3M198.5 87.8V114.8M199.5 81.3V121.3M201.5 83.6V119.0M206.5 93.1V109.5M208.5 93.6V109.0M221.5 83.6V119.0M225.5 95.1V107.5M227.5 95.8V106.8M228.5 95.6V107.0M229.5 96.3V106.3M230.5 92.5V110.1M231.5 95.2V107.4M232.5 91.9V110.7M234.5 70.6V132.0M236.5 90.0V112.6M237.5 88.0V114.6M238.5 89.5V113.1M242.5 87.0V115.6M248.5 94.7V107.9M251.5 96.0V106.6M256.5 82.7V119.9M257.5 83.0V119.6M258.5 89.6V113.0M259.5 84.1V118.5M260.5 91.7V110.9M263.5 88.4V114.2M265.5 87.8V114.8M267.5 83.4V119.2M268.5 87.2V115.4M269.5 87.4V115.2M271.5 96.3V106.3M280.5 84.0V118.6M281.5 81.4V121.2M284.5 79.8V122.8M285.5 81.6V121.0M286.5 85.9V116.7M287.5 86.1V116.5M291.5 90.3V112.3M292.5 93.6V109.0M294.5 96.8V105.8M295.5 95.2V107.4M299.5 92.2V110.4M301.5 91.6V111.0M303.5 88.3V114.3M307.5 92.9V109.7M308.5 87.4V115.2M313.5 95.9V106.7M314.5 92.6V110.0M316.5 93.2V109.4M318.5 92.6V110.0M321.5 80.4V122.2M325.5 87.8V114.8M329.5 80.2V122.4M331.5 94.3V108.3M335.5 94.5V108.1M337.5 96.4V106.2M343.5 91.9V110.7M346.5 78.2V124.4M350.5 80.0V122.6M358.5 86.5V116.1M360.5 93.4V109.2M362.5 93.7V108.9M366.5 78.7V123.9M367.5 66.6V136.0M370.5 90.7V111.9M374.5 90.7V111.9M377.5 80.0V122.6M378.5 92.8V109.8M380.5 94.4V108.2M382.5 87.5V115.1M384.5 93.4V109.2M386.5 90.8V111.8M387.5 77.7V124.9M388.5 87.3V115.3M389.5 78.6V124.0M390.5 85.5V117.1M391.5 93.9V108.7M392.5 89.0V113.6M400.5 85.0V117.6M401.5 89.4V113.2M402.5 92.2V110.4M405.5 92.8V109.8M406.5 90.7V111.9M407.5 95.4V107.2M412.5 72.6V130.0M414.5 86.0V116.6M416.5 78.2V124.4M418.5 82.3V120.3M419.5 85.2V117.4M421.5 78.7V123.9M422.5 87.1V115.5M423.5 92.8V109.8M430.5 97.1V105.5M432.5 87.4V115.2M439.5 90.8V111.8M447.5 89.4V113.2M450.5 96.1V106.5M451.5 94.5V108.1M452.5 96.5V106.1M456.5 80.4V122.2M457.5 76.4V126.2M460.5 84.1V118.5M463.5 90.8V111.8M466.5 94.0V108.6M469.5 96.5V106.1M471.5 90.5V112.1M477.5 78.3V124.3M487.5 86.6V116.0M488.5 87.3V115.3M489.5 91.5V111.1M490.5 89.6V113.0M492.5 85.8V116.8M494.5 92.8V109.8M495.5 95.7V106.9M499.5 70.1V132.5M508.5 92.6V110.0M511.5 92.4V110.2M513.5 97.3V105.3M515.5 96.5V106.1M517.5 94.3V108.3M518.5 97.7V104.9M520.5 86.8V115.8M521.5 86.2V116.4M522.5 83.8V118.8M524.5 82.6V120.0M526.5 88.5V114.1M530.5 80.0V122.6M539.5 93.9V108.7M545.5 77.2V125.4M546.5 88.7V113.9M547.5 79.9V122.7M552.5 79.0V123.6M553.5 86.7V115.9M556.5 91.6V111.0M559.5 89.8V112.8M562.5 96.0V106.6M564.5 86.2V116.4M568.5 79.9V122.7M571.5 92.6V110.0M574.5 92.9V109.7M575.5 86.0V116.6M576.5 78.1V124.5M577.5 85.3V117.3M578.5 86.5V116.1M579.5 85.6V117.0M580.5 94.7V107.9M581.5 96.2V106.4M585.5 94.6V108.0M586.5 86.1V116.5M588.5 66.4V136.2M591.5 85.6V117.0M599.5 88.2V114.4M604.5 92.3V110.3M605.5 93.0V109.6M608.5 84.3V118.3M609.5 78.0V124.6M615.5 86.0V116.6M621.5 90.5V112.1M631.5 83.5V119.1M632.5 73.3V129.3M637.5 82.9V119.7M638.5 82.2V120.4M640.5 80.5V122.1M641.5 86.9V115.7M642.5 82.1V120.5M645.5 94.4V108.2M647.5 90.7V111.9M651.5 96.0V106.6M652.5 93.5V109.1M653.5 78.5V124.1M654.5 80.4V122.2M658.5 82.1V120.5M659.5 85.0V117.6M661.5 83.0V119.6M664.5 89.0V113.6M665.5 93.6V109.0M666.5 90.8V111.8M668.5 90.0V112.6M671.5 96.5V106.1M672.5 91.7V110.9M684.5 91.1V111.5M686.5 91.9V110.7M687.5 90.1V112.5M689.5 84.7V117.9M692.5 90.4V112.2M695.5 94.5V108.1M696.5 98.9V103.7M700.5 85.5V117.1M703.5 82.7V119.9M706.5 78.3V124.3M708.5 80.4V122.2M711.5 92.1V110.5M712.5 89.8V112.8M713.5 95.6V107.0M717.5 94.4V108.2M718.5 91.9V110.7M720.5 74.7V127.9M721.5 77.5V125.1M723.5 81.0V121.6M725.5 83.1V119.5M728.5 78.4V124.2M729.5 89.5V113.1M735.5 96.3V106.3M736.5 93.7V108.9M739.5 96.8V105.8M740.5 94.7V107.9M741.5 88.0V114.6" stroke="#f4f4f4" stroke-opacity="0.30" stroke-width="1"/><rect x="127" y="101.2" width="619" height="1.8" fill="#e8e8e8" fill-opacity="0.25"/></g>
 <use href="#w1" y="106"/>
 <rect x="226" y="52" width="1" height="100" fill="#a4a4a4" fill-opacity="0.85"/><rect x="327" y="52" width="1" height="100" fill="#a4a4a4" fill-opacity="0.85"/><rect x="427" y="52" width="1" height="100" fill="#a4a4a4" fill-opacity="0.85"/><rect x="527" y="52" width="1" height="100" fill="#a4a4a4" fill-opacity="0.85"/><rect x="627" y="52" width="1" height="100" fill="#a4a4a4" fill-opacity="0.85"/><rect x="728" y="52" width="1" height="100" fill="#a4a4a4" fill-opacity="0.85"/>
 <rect x="226" y="158" width="1" height="100" fill="#a4a4a4" fill-opacity="0.85"/><rect x="327" y="158" width="1" height="100" fill="#a4a4a4" fill-opacity="0.85"/><rect x="427" y="158" width="1" height="100" fill="#a4a4a4" fill-opacity="0.85"/><rect x="527" y="158" width="1" height="100" fill="#a4a4a4" fill-opacity="0.85"/><rect x="627" y="158" width="1" height="100" fill="#a4a4a4" fill-opacity="0.85"/><rect x="728" y="158" width="1" height="100" fill="#a4a4a4" fill-opacity="0.85"/>

 <!-- scrollbars -->
 <rect x="748.3" y="55" width="2.8" height="15.5" rx="1.4" fill="#c8c8c8"/>
 <rect x="103" y="417" width="649" height="6" fill="#333"/>
 <rect x="131" y="418" width="18.5" height="5" rx="2.5" fill="#1c1c1c"/>
 <rect x="132" y="419" width="16.3" height="3" rx="1.5" fill="#d8d8d8"/>
 <path d="M743.8 418.8 L746.4 420.4 L743.8 422Z" fill="#c8c8c8"/>
 <path d="M130 419 L128 420.5 L130 422Z" fill="#555"/>
 <path d="M748 415 L751 415 L749.5 416.6Z" fill="#505050"/>
</svg>
</body></html>
